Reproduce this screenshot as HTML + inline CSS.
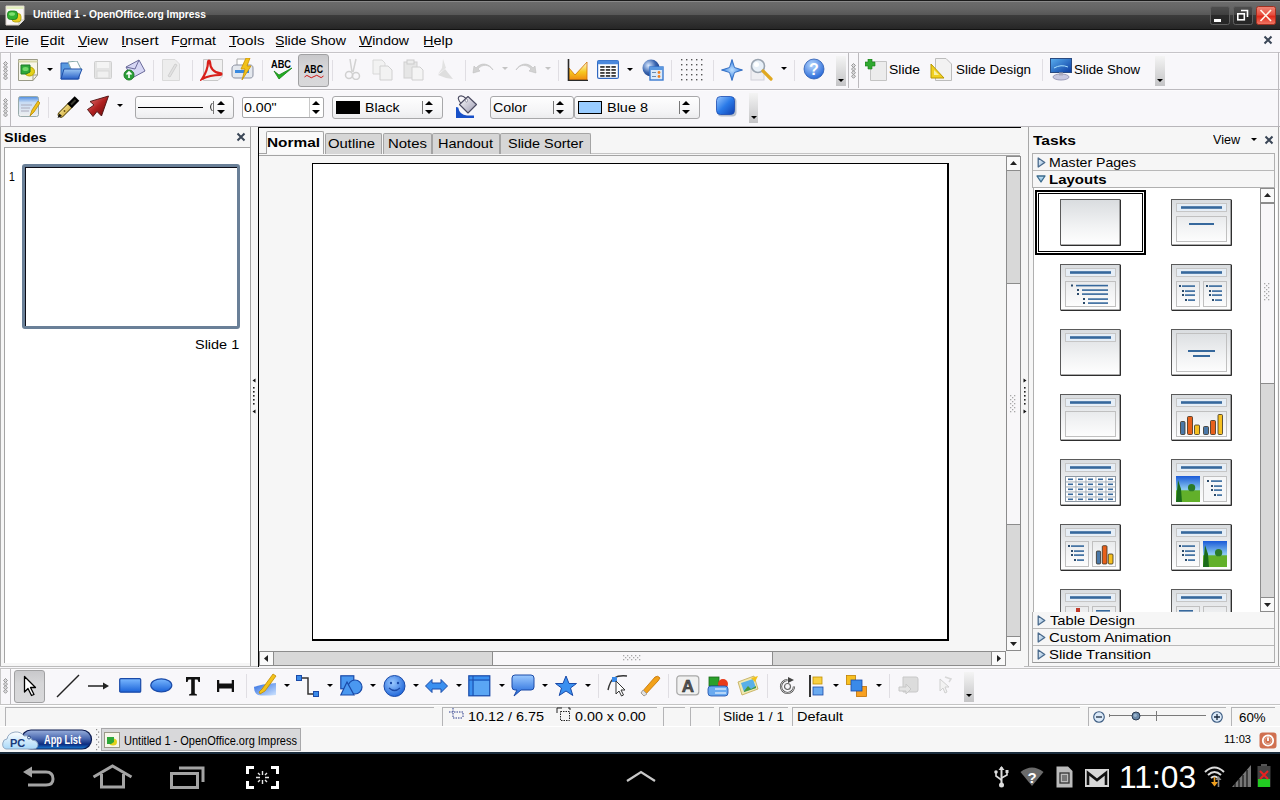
<!DOCTYPE html><html><head><meta charset="utf-8"><style>
html,body{margin:0;padding:0;width:1280px;height:800px;overflow:hidden;background:#f8f7fa;}
.a{position:absolute;}
.t{position:absolute;white-space:nowrap;font-family:"Liberation Sans",sans-serif;line-height:1;transform-origin:0 0;}
svg{display:block;}
</style></head><body>
<div class="a" style="left:0px;top:0px;width:1280px;height:30px;background:linear-gradient(#1a1a1a 0px,#1a1a1a 1px,#8a8a8a 1px,#8a8a8a 2px,#6c6c6c 2px,#646464 9px,#575757 15px,#3c3c3c 15px,#262626 29px,#121212 29px,#121212 30px)"></div>
<svg class="a" style="left:5px;top:5px;" width="20" height="21" viewBox="0 0 20 21"><path d="M1 1H19V15L14 20H1Z" fill="#faf6f6" stroke="#d8d0c8"/><path d="M1.5 1.5H18.5V4H1.5Z" fill="#e4f0c0"/><path d="M14 20V15H19" fill="#e8e8e8" stroke="#c0c0b8"/><rect x="7" y="8.5" width="9" height="8.5" rx="3" fill="#e8d020" stroke="#b0a010" stroke-width="0.8"/><rect x="2.5" y="6" width="10" height="8.5" rx="3" fill="#30b030" stroke="#1a7a1a" stroke-width="0.8"/><ellipse cx="7" cy="9" rx="3" ry="1.8" fill="#80e070"/></svg>
<div class="t" style="left:33.00px;top:8px;font-size:11.5px;line-height:12px;font-weight:bold;color:#ffffff;transform:scaleX(0.8936);">Untitled 1 - OpenOffice.org Impress</div>
<svg class="a" style="left:1210px;top:6px;" width="20" height="19" viewBox="0 0 20 19"><defs><linearGradient id="wb" x1="0" y1="0" x2="0" y2="1"><stop offset="0" stop-color="#4e4e4e"/><stop offset="0.5" stop-color="#3e3e3e"/><stop offset="0.5" stop-color="#2a2a2a"/><stop offset="1" stop-color="#262626"/></linearGradient></defs><rect x="0.5" y="0.5" width="19" height="18" rx="2" fill="url(#wb)" stroke="#606060"/><rect x="4" y="13" width="7" height="3" fill="#fff"/></svg>
<svg class="a" style="left:1233px;top:6px;" width="20" height="19" viewBox="0 0 20 19"><rect x="0.5" y="0.5" width="19" height="18" rx="2" fill="url(#wb)" stroke="#606060"/><path d="M8 4.5H14.5V11" fill="none" stroke="#fff" stroke-width="1.6"/><rect x="4.8" y="7.8" width="6.5" height="6" fill="none" stroke="#fff" stroke-width="1.6"/></svg>
<svg class="a" style="left:1256px;top:6px;" width="20" height="19" viewBox="0 0 20 19"><defs><linearGradient id="rg" x1="0" y1="0" x2="0" y2="1"><stop offset="0" stop-color="#f08878"/><stop offset="0.45" stop-color="#e85040"/><stop offset="0.55" stop-color="#e02a1a"/><stop offset="1" stop-color="#f07a68"/></linearGradient></defs><rect x="0.5" y="0.5" width="19" height="18" rx="2" fill="url(#rg)" stroke="#a03020"/><path d="M4.5 4L15 15M15 4L4.5 15" stroke="#fff4e8" stroke-width="1.7"/></svg>
<div class="a" style="left:0px;top:30px;width:1280px;height:22px;background:#f8f7fa"></div>
<div class="t" style="left:5.00px;top:34px;font-size:12.6px;line-height:14px;color:#000;transform:scaleX(1.1902);">File</div>
<div class="a" style="left:6px;top:46px;width:7px;height:1px;background:#000"></div>
<div class="t" style="left:40.00px;top:34px;font-size:12.6px;line-height:14px;color:#000;transform:scaleX(1.1309);">Edit</div>
<div class="a" style="left:41px;top:46px;width:7px;height:1px;background:#000"></div>
<div class="t" style="left:78.00px;top:34px;font-size:12.6px;line-height:14px;color:#000;transform:scaleX(1.1074);">View</div>
<div class="a" style="left:78px;top:46px;width:9px;height:1px;background:#000"></div>
<div class="t" style="left:121.00px;top:34px;font-size:12.6px;line-height:14px;color:#000;transform:scaleX(1.1921);">Insert</div>
<div class="a" style="left:122px;top:46px;width:4px;height:1px;background:#000"></div>
<div class="t" style="left:171.00px;top:34px;font-size:12.6px;line-height:14px;color:#000;transform:scaleX(1.1290);">Format</div>
<div class="a" style="left:180px;top:46px;width:7px;height:1px;background:#000"></div>
<div class="t" style="left:229.00px;top:34px;font-size:12.6px;line-height:14px;color:#000;transform:scaleX(1.2074);">Tools</div>
<div class="a" style="left:229px;top:46px;width:7px;height:1px;background:#000"></div>
<div class="t" style="left:275.00px;top:34px;font-size:12.6px;line-height:14px;color:#000;transform:scaleX(1.1248);">Slide Show</div>
<div class="a" style="left:276px;top:46px;width:8px;height:1px;background:#000"></div>
<div class="t" style="left:359.00px;top:34px;font-size:12.6px;line-height:14px;color:#000;transform:scaleX(1.1147);">Window</div>
<div class="a" style="left:359px;top:46px;width:13px;height:1px;background:#000"></div>
<div class="t" style="left:423.00px;top:34px;font-size:12.6px;line-height:14px;color:#000;transform:scaleX(1.1539);">Help</div>
<div class="a" style="left:424px;top:46px;width:10px;height:1px;background:#000"></div>
<svg class="a" style="left:1263px;top:35px;" width="10" height="10" viewBox="0 0 10 10"><path d="M1.5 1.5L8.5 8.5M8.5 1.5L1.5 8.5" stroke="#3a4656" stroke-width="2"/></svg>
<div class="a" style="left:0px;top:52px;width:1280px;height:1px;background:#c6c4c8"></div>
<div class="a" style="left:0px;top:53px;width:1280px;height:1px;background:#fcfbfd"></div>
<div class="a" style="left:0px;top:89px;width:1280px;height:1px;background:#bcbabe"></div>
<div class="a" style="left:0px;top:90px;width:1280px;height:1px;background:#fcfbfd"></div>
<div class="a" style="left:0px;top:126px;width:1280px;height:1px;background:#b8b6ba"></div>
<div class="a" style="left:1278px;top:52px;width:1px;height:74px;background:#bcbabe"></div>
<div class="a" style="left:0px;top:53px;width:1px;height:36px;background:#c8c8c8"></div>
<div class="a" style="left:10px;top:53px;width:1px;height:36px;background:#bcbabe"></div>
<svg class="a" style="left:3px;top:61px;" width="5" height="20" viewBox="0 0 5 20"><path d="M2.5 0.5L4.5 2.5L2.5 4.5L0.5 2.5Z" fill="#d8d8da" stroke="#8e8e90" stroke-width="0.9"/><path d="M2.5 4.1L4.5 6.1L2.5 8.1L0.5 6.1Z" fill="#d8d8da" stroke="#8e8e90" stroke-width="0.9"/><path d="M2.5 7.7L4.5 9.7L2.5 11.7L0.5 9.7Z" fill="#d8d8da" stroke="#8e8e90" stroke-width="0.9"/><path d="M2.5 11.3L4.5 13.3L2.5 15.3L0.5 13.3Z" fill="#d8d8da" stroke="#8e8e90" stroke-width="0.9"/><path d="M2.5 14.9L4.5 16.9L2.5 18.9L0.5 16.9Z" fill="#d8d8da" stroke="#8e8e90" stroke-width="0.9"/></svg>
<div class="a" style="left:0px;top:90px;width:1px;height:36px;background:#c8c8c8"></div>
<div class="a" style="left:10px;top:90px;width:1px;height:36px;background:#bcbabe"></div>
<svg class="a" style="left:3px;top:98px;" width="5" height="20" viewBox="0 0 5 20"><path d="M2.5 0.5L4.5 2.5L2.5 4.5L0.5 2.5Z" fill="#d8d8da" stroke="#8e8e90" stroke-width="0.9"/><path d="M2.5 4.1L4.5 6.1L2.5 8.1L0.5 6.1Z" fill="#d8d8da" stroke="#8e8e90" stroke-width="0.9"/><path d="M2.5 7.7L4.5 9.7L2.5 11.7L0.5 9.7Z" fill="#d8d8da" stroke="#8e8e90" stroke-width="0.9"/><path d="M2.5 11.3L4.5 13.3L2.5 15.3L0.5 13.3Z" fill="#d8d8da" stroke="#8e8e90" stroke-width="0.9"/><path d="M2.5 14.9L4.5 16.9L2.5 18.9L0.5 16.9Z" fill="#d8d8da" stroke="#8e8e90" stroke-width="0.9"/></svg>
<div class="a" style="left:848px;top:53px;width:1px;height:35px;background:#bcbabe"></div>
<div class="a" style="left:858px;top:53px;width:1px;height:35px;background:#bcbabe"></div>
<svg class="a" style="left:851px;top:63px;" width="5" height="17" viewBox="0 0 5 17"><path d="M2.5 0.5L4.5 2.5L2.5 4.5L0.5 2.5Z" fill="#d8d8da" stroke="#8e8e90" stroke-width="0.9"/><path d="M2.5 4.1L4.5 6.1L2.5 8.1L0.5 6.1Z" fill="#d8d8da" stroke="#8e8e90" stroke-width="0.9"/><path d="M2.5 7.7L4.5 9.7L2.5 11.7L0.5 9.7Z" fill="#d8d8da" stroke="#8e8e90" stroke-width="0.9"/><path d="M2.5 11.3L4.5 13.3L2.5 15.3L0.5 13.3Z" fill="#d8d8da" stroke="#8e8e90" stroke-width="0.9"/></svg>
<svg class="a" style="left:18px;top:59px;" width="21" height="22" viewBox="0 0 21 22"><path d="M0.5 0.5H19.5V16L15 21.5H0.5Z" fill="#f8f6ea" stroke="#9a9a88"/><path d="M0.5 2.5H19.5" stroke="#d8d8a8" stroke-width="2"/><path d="M15 21.5V16H19.5" fill="none" stroke="#9a9a88"/><ellipse cx="11.5" cy="12.5" rx="5" ry="4.5" fill="#e3d21a" stroke="#b8a400"/><path d="M3 6H12V13L8 15H3Z" fill="#2ea83a" stroke="#1d7a28"/><ellipse cx="7.5" cy="10" rx="3" ry="2" fill="#72d86a"/></svg>
<svg class="a" style="left:46.5px;top:68px;" width="6" height="4" viewBox="0 0 6 4"><path d="M0 0H6L3 3Z" fill="#000"/></svg>
<svg class="a" style="left:60px;top:61px;" width="23" height="19" viewBox="0 0 23 19"><defs><linearGradient id="fo" x1="0" y1="0" x2="0" y2="1"><stop offset="0" stop-color="#9cc8f4"/><stop offset="1" stop-color="#2a62c8"/></linearGradient></defs><path d="M1 2H8L10 4H19V18H1Z" fill="#5a9ae0" stroke="#2a5ab0"/><path d="M8 1L17 0L21 8L12 10Z" fill="#fff" stroke="#8aa"/><path d="M4 8H22L18 18H1Z" fill="url(#fo)" stroke="#1e4ea8"/></svg>
<svg class="a" style="left:94px;top:61px;" width="18" height="18" viewBox="0 0 18 18"><rect x="0.5" y="0.5" width="17" height="17" rx="1" fill="#e4e4e4" stroke="#cfcfcf"/><rect x="3" y="1" width="12" height="6" fill="#f4f4f4"/><rect x="3" y="10" width="12" height="7" fill="#f0f0f0" stroke="#d8d8d8"/></svg>
<svg class="a" style="left:123px;top:59px;" width="23" height="22" viewBox="0 0 23 22"><path d="M3 8L16 1L22 12L9 19Z" fill="#d6d6f4" stroke="#6a6a9a"/><path d="M3 8L12 10L16 1" fill="none" stroke="#6a6a9a"/><circle cx="6" cy="16" r="5" fill="#2ca03a" stroke="#1a7a24"/><path d="M6 19V13M3.5 15.5L6 13L8.5 15.5" stroke="#fff" stroke-width="1.6" fill="none"/></svg>
<div class="a" style="left:153px;top:60px;width:1px;height:21px;background:#e0dee3"></div>
<svg class="a" style="left:162px;top:59px;" width="18" height="22" viewBox="0 0 18 22"><path d="M0.5 0.5H13L17.5 5V21.5H0.5Z" fill="#ededed" stroke="#dadada"/><path d="M6 17L13 5L15 6L8 18Z" fill="#e2e2e2" stroke="#d0d0d0"/></svg>
<div class="a" style="left:192px;top:60px;width:1px;height:21px;background:#e0dee3"></div>
<svg class="a" style="left:200px;top:59px;" width="23" height="22" viewBox="0 0 23 22"><path d="M3.5 0.5H22.5V17L18 21.5H3.5Z" fill="#f0f0f0" stroke="#c8c8c8"/><path d="M2 20C6 14 8 9 8 3C8 1 10 1 10 3C10 9 14 14 20 14C22 14 22 16 20 16C14 16 6 18 2 20Z" fill="none" stroke="#d8201a" stroke-width="2.2"/></svg>
<svg class="a" style="left:231px;top:58px;" width="23" height="23" viewBox="0 0 23 23"><path d="M6 1H16V10H6Z" fill="#fff" stroke="#aaa"/><path d="M1 10C1 8 3 7 5 7H19C21 7 22 8 22 10V17C22 19 21 20 19 20H4C2 20 1 19 1 17Z" fill="#e4e8ee" stroke="#8a90a0"/><rect x="4" y="12" width="14" height="3" fill="#3a8ae0"/><path d="M15 0L10 11H14L11 22L20 8H16L19 0Z" fill="#f2c21a" stroke="#c89000" stroke-width="0.8"/></svg>
<div class="a" style="left:262px;top:60px;width:1px;height:21px;background:#e0dee3"></div>
<svg class="a" style="left:271px;top:58px;" width="22" height="24" viewBox="0 0 22 24"><text x="0" y="10" font-family="Liberation Sans" font-weight="bold" font-size="11" fill="#000" textLength="20" lengthAdjust="spacingAndGlyphs">ABC</text><path d="M3 13L8 21L21 10L8 17Z" fill="#22b022" stroke="#138013" stroke-width="0.8"/></svg>
<div class="a" style="left:298px;top:54px;width:31px;height:33px;background:linear-gradient(#c8c8cb,#d6d6d8 40%,#d8d8da);border:1px solid #a0a0a2;border-radius:3px;box-sizing:border-box"></div>
<svg class="a" style="left:304px;top:63px;" width="20" height="16" viewBox="0 0 20 16"><text x="0" y="10" font-family="Liberation Sans" font-weight="bold" font-size="11" fill="#000" textLength="19" lengthAdjust="spacingAndGlyphs">ABC</text><path d="M0.5 14Q3 11 5 13.5T10 13.5T15 13.5T19.5 13" fill="none" stroke="#d01818" stroke-width="1"/></svg>
<div class="a" style="left:332px;top:60px;width:1px;height:21px;background:#e0dee3"></div>
<svg class="a" style="left:343px;top:58px;" width="18" height="22" viewBox="0 0 18 22"><path d="M7 1L9 14M13 1L10 14" stroke="#d2d2d2" stroke-width="1.5"/><circle cx="6" cy="17" r="3.5" fill="none" stroke="#d0d0d0" stroke-width="1.5"/><circle cx="13" cy="18" r="3.5" fill="none" stroke="#d0d0d0" stroke-width="1.5"/></svg>
<svg class="a" style="left:372px;top:59px;" width="21" height="22" viewBox="0 0 21 22"><path d="M1 1H10L13 4V15H1Z" fill="#f2f2f2" stroke="#d8d8d8"/><path d="M8 7H16L20 11V21H8Z" fill="#f2f2f2" stroke="#d0d0d0"/></svg>
<svg class="a" style="left:403px;top:59px;" width="21" height="22" viewBox="0 0 21 22"><rect x="1" y="3" width="13" height="16" fill="#e6e6e6" stroke="#d0d0d0"/><rect x="4" y="1" width="7" height="4" fill="#ececec" stroke="#ccc"/><path d="M9 8H17L20 11V21H9Z" fill="#f4f4f4" stroke="#d0d0d0"/></svg>
<svg class="a" style="left:434px;top:58px;" width="21" height="23" viewBox="0 0 21 23"><path d="M9 1L12 10L4 16L8 10Z" fill="#e2e2e2"/><path d="M4 17L11 11L19 21L12 20Z" fill="#dedede"/></svg>
<div class="a" style="left:465px;top:60px;width:1px;height:21px;background:#e0dee3"></div>
<svg class="a" style="left:472px;top:62px;" width="22" height="16" viewBox="0 0 22 16"><path d="M21 8C17 2 10 2 6 7L8 9L1 11L2 4L4 6C9 0 17 1 21 8Z" fill="#d2d2d2" stroke="#c0c0c0" stroke-width="0.6"/></svg>
<svg class="a" style="left:501.5px;top:67px;" width="6" height="4" viewBox="0 0 6 4"><path d="M0 0H6L3 3Z" fill="#c4c4c4"/></svg>
<svg class="a" style="left:515px;top:62px;" width="22" height="16" viewBox="0 0 22 16"><path d="M1 8C5 2 12 2 16 7L14 9L21 11L20 4L18 6C13 0 5 1 1 8Z" fill="#d2d2d2" stroke="#c0c0c0" stroke-width="0.6"/></svg>
<svg class="a" style="left:544.5px;top:67px;" width="6" height="4" viewBox="0 0 6 4"><path d="M0 0H6L3 3Z" fill="#c4c4c4"/></svg>
<div class="a" style="left:558px;top:60px;width:1px;height:21px;background:#e0dee3"></div>
<svg class="a" style="left:567px;top:59px;" width="22" height="22" viewBox="0 0 22 22"><defs><linearGradient id="ch" x1="0" y1="0" x2="0" y2="1"><stop offset="0" stop-color="#fffbe0"/><stop offset="0.55" stop-color="#f6c820"/><stop offset="1" stop-color="#f08a10"/></linearGradient></defs><path d="M2 21V9L8 16L20 3V21Z" fill="url(#ch)" stroke="#d07000" stroke-width="0.8"/><path d="M1.5 0V21.5H21" fill="none" stroke="#2a2a2a" stroke-width="1.6"/></svg>
<svg class="a" style="left:597px;top:60px;" width="22" height="19" viewBox="0 0 22 19"><rect x="0.6" y="0.6" width="20.8" height="17.8" rx="1.5" fill="#fff" stroke="#3068c0" stroke-width="1.2"/><rect x="0.6" y="0.6" width="20.8" height="3.6" rx="1.2" fill="#4a88dc"/><g fill="#111"><rect x="3.2" y="6.2" width="4.4" height="1.5"/><rect x="8.8" y="6.2" width="4.4" height="1.5"/><rect x="14.4" y="6.2" width="4.4" height="1.5"/><rect x="3.2" y="9.2" width="4.4" height="1.5"/><rect x="8.8" y="9.2" width="4.4" height="1.5"/><rect x="14.4" y="9.2" width="4.4" height="1.5"/><rect x="3.2" y="12.2" width="4.4" height="1.5"/><rect x="8.8" y="12.2" width="4.4" height="1.5"/><rect x="14.4" y="12.2" width="4.4" height="1.5"/><rect x="3.2" y="15.2" width="4.4" height="1.5"/><rect x="8.8" y="15.2" width="4.4" height="1.5"/><rect x="14.4" y="15.2" width="4.4" height="1.5"/></g></svg>
<svg class="a" style="left:626.5px;top:68px;" width="6" height="4" viewBox="0 0 6 4"><path d="M0 0H6L3 3Z" fill="#000"/></svg>
<svg class="a" style="left:642px;top:59px;" width="22" height="22" viewBox="0 0 22 22"><defs><radialGradient id="gl" cx="0.35" cy="0.35" r="0.7"><stop offset="0" stop-color="#d8e8ff"/><stop offset="0.6" stop-color="#3a66b0"/><stop offset="1" stop-color="#1a3a80"/></radialGradient></defs><circle cx="9" cy="9" r="8.5" fill="url(#gl)"/><rect x="8" y="8" width="13" height="13" fill="#dceaf8" stroke="#3a7ad0" stroke-width="1.4"/><rect x="8" y="8" width="13" height="3" fill="#5a98e0"/><circle cx="17" cy="13.5" r="1.4" fill="#f08020"/><circle cx="17" cy="17.5" r="1.4" fill="#f08020"/><rect x="10" y="13" width="4" height="1" fill="#6a8ab0"/><rect x="10" y="17" width="4" height="1" fill="#6a8ab0"/></svg>
<div class="a" style="left:671px;top:60px;width:1px;height:21px;background:#e0dee3"></div>
<svg class="a" style="left:681px;top:59px;" width="22" height="22" viewBox="0 0 22 22"><rect x="0" y="0" width="1.4" height="1.4" fill="#555"/><rect x="0" y="5" width="1.4" height="1.4" fill="#555"/><rect x="0" y="10" width="1.4" height="1.4" fill="#555"/><rect x="0" y="15" width="1.4" height="1.4" fill="#555"/><rect x="0" y="20" width="1.4" height="1.4" fill="#555"/><rect x="5" y="0" width="1.4" height="1.4" fill="#555"/><rect x="5" y="5" width="1.4" height="1.4" fill="#555"/><rect x="5" y="10" width="1.4" height="1.4" fill="#555"/><rect x="5" y="15" width="1.4" height="1.4" fill="#555"/><rect x="5" y="20" width="1.4" height="1.4" fill="#555"/><rect x="10" y="0" width="1.4" height="1.4" fill="#555"/><rect x="10" y="5" width="1.4" height="1.4" fill="#555"/><rect x="10" y="10" width="1.4" height="1.4" fill="#555"/><rect x="10" y="15" width="1.4" height="1.4" fill="#555"/><rect x="10" y="20" width="1.4" height="1.4" fill="#555"/><rect x="15" y="0" width="1.4" height="1.4" fill="#555"/><rect x="15" y="5" width="1.4" height="1.4" fill="#555"/><rect x="15" y="10" width="1.4" height="1.4" fill="#555"/><rect x="15" y="15" width="1.4" height="1.4" fill="#555"/><rect x="15" y="20" width="1.4" height="1.4" fill="#555"/><rect x="20" y="0" width="1.4" height="1.4" fill="#555"/><rect x="20" y="5" width="1.4" height="1.4" fill="#555"/><rect x="20" y="10" width="1.4" height="1.4" fill="#555"/><rect x="20" y="15" width="1.4" height="1.4" fill="#555"/><rect x="20" y="20" width="1.4" height="1.4" fill="#555"/></svg>
<div class="a" style="left:713px;top:60px;width:1px;height:21px;background:#e0dee3"></div>
<svg class="a" style="left:721px;top:59px;" width="22" height="22" viewBox="0 0 22 22"><defs><radialGradient id="st" cx="0.5" cy="0.5" r="0.5"><stop offset="0" stop-color="#bfe0ff"/><stop offset="1" stop-color="#2a78e0"/></radialGradient></defs><path d="M11 0.5L13.5 8.5L21.5 11L13.5 13.5L11 21.5L8.5 13.5L0.5 11L8.5 8.5Z" fill="url(#st)" stroke="#1a5ab8" stroke-width="0.8"/></svg>
<svg class="a" style="left:750px;top:58px;" width="24" height="23" viewBox="0 0 24 23"><rect x="1" y="9" width="13" height="13" fill="#eeeef2" stroke="#d0d0d8"/><circle cx="8" cy="8" r="6.5" fill="#e8f0f8" stroke="#9aa4b0" stroke-width="1.6"/><circle cx="6.5" cy="6.5" r="2.5" fill="#fff"/><path d="M13 13L21 21" stroke="#e0a820" stroke-width="3.2" stroke-linecap="round"/></svg>
<svg class="a" style="left:780.5px;top:67px;" width="6" height="4" viewBox="0 0 6 4"><path d="M0 0H6L3 3Z" fill="#000"/></svg>
<div class="a" style="left:794px;top:60px;width:1px;height:21px;background:#e0dee3"></div>
<svg class="a" style="left:803px;top:58px;" width="22" height="22" viewBox="0 0 22 22"><defs><radialGradient id="hp" cx="0.4" cy="0.3" r="0.7"><stop offset="0" stop-color="#b8d8ff"/><stop offset="1" stop-color="#2a6ad8"/></radialGradient></defs><circle cx="11" cy="11" r="10" fill="url(#hp)" stroke="#2a5ab0" stroke-width="0.8"/><text x="11" y="17" text-anchor="middle" font-family="Liberation Sans" font-weight="bold" font-size="16" fill="#fff">?</text></svg>
<div class="a" style="left:836px;top:56px;width:10px;height:30px;background:linear-gradient(#f4f4f4,#c4c4c6)"></div>
<svg class="a" style="left:838px;top:79px;" width="6" height="4" viewBox="0 0 6 4"><path d="M0 0H6L3 3Z" fill="#000"/></svg>
<svg class="a" style="left:865px;top:59px;" width="23" height="22" viewBox="0 0 23 22"><path d="M5.5 2.5H21.5V21.5H5.5Z" fill="#ececec" stroke="#c4c4c4"/><path d="M3 0H7V3H10V7H7V10H3V7H0V3H3Z" fill="#2fa82f" stroke="#1a7a1a" stroke-width="0.6"/></svg>
<div class="t" style="left:889.00px;top:62px;font-size:13px;line-height:15px;color:#000;transform:scaleX(1.0755);">Slide</div>
<svg class="a" style="left:930px;top:58px;" width="22" height="23" viewBox="0 0 22 23"><path d="M5.5 0.5H16L21.5 6V22.5H5.5Z" fill="#f2f2f2" stroke="#bcbcbc"/><path d="M1 20L1 6L14 20Z" fill="#f0d020" stroke="#b89800"/><path d="M4 17V12L9 17Z" fill="#f8f0a0"/></svg>
<div class="t" style="left:956.00px;top:62px;font-size:13px;line-height:15px;color:#000;transform:scaleX(1.0282);">Slide Design</div>
<div class="a" style="left:1042px;top:59px;width:1px;height:22px;background:#e0dee3"></div>
<svg class="a" style="left:1050px;top:58px;" width="22" height="23" viewBox="0 0 22 23"><defs><linearGradient id="mon" x1="0" y1="0" x2="1" y2="1"><stop offset="0" stop-color="#5ab0f0"/><stop offset="1" stop-color="#0a3aa0"/></linearGradient></defs><rect x="0.5" y="0.5" width="21" height="14" fill="url(#mon)" stroke="#2a4a80"/><path d="M4 10Q11 6 18 9" stroke="#a8e0ff" stroke-width="1" fill="none"/><ellipse cx="11" cy="19" rx="8" ry="3" fill="#c8c8e0" stroke="#9a9ab8"/><rect x="9" y="14.5" width="4" height="3" fill="#aab"/></svg>
<div class="t" style="left:1074.00px;top:62px;font-size:13px;line-height:15px;color:#000;transform:scaleX(1.0146);">Slide Show</div>
<div class="a" style="left:1155px;top:56px;width:10px;height:30px;background:linear-gradient(#f4f4f4,#c4c4c6)"></div>
<svg class="a" style="left:1157px;top:79px;" width="6" height="4" viewBox="0 0 6 4"><path d="M0 0H6L3 3Z" fill="#000"/></svg>
<svg class="a" style="left:18px;top:96px;" width="22" height="22" viewBox="0 0 22 22"><defs><linearGradient id="se" x1="0" y1="0" x2="0" y2="1"><stop offset="0" stop-color="#4a8ae0"/><stop offset="0.3" stop-color="#c8dcf4"/><stop offset="1" stop-color="#f0f0f0"/></linearGradient></defs><rect x="0.5" y="0.5" width="20" height="20" rx="2" fill="url(#se)" stroke="#9aa"/><path d="M3 9H14M3 12H12M3 15H11" stroke="#aab" stroke-width="1"/><path d="M12 20L14 14L20 5L22 7L16 16Z" fill="#f2c21a" stroke="#b88a00" stroke-width="0.8"/></svg>
<div class="a" style="left:48px;top:97px;width:1px;height:21px;background:#e0dee3"></div>
<svg class="a" style="left:56px;top:95px;" width="24" height="24" viewBox="0 0 24 24"><defs><linearGradient id="pg" x1="0" y1="0" x2="1" y2="1"><stop offset="0" stop-color="#fff0a0"/><stop offset="1" stop-color="#c8a030"/></linearGradient></defs><path d="M5 19.5L14 10.5" stroke="#5a4a10" stroke-width="6.5" stroke-linecap="round"/><path d="M5 19.5L14 10.5" stroke="url(#pg)" stroke-width="4.6" stroke-linecap="round"/><path d="M13.5 11L21 3.5" stroke="#000" stroke-width="6.5"/><path d="M15 9.5L19.5 5" stroke="#3a3a30" stroke-width="2"/><path d="M1.5 23L3.5 18.5L6 21Z" fill="#111"/><circle cx="8.5" cy="16" r="0.9" fill="#6a5010"/></svg>
<svg class="a" style="left:86px;top:95px;" width="24" height="24" viewBox="0 0 24 24"><defs><linearGradient id="ar" x1="0" y1="0" x2="1" y2="1"><stop offset="0" stop-color="#e88080"/><stop offset="0.5" stop-color="#b02020"/><stop offset="1" stop-color="#600808"/></linearGradient></defs><path d="M22.5 1L4 6.5L8 10L1.5 14.5L7 21.5L11 16.5L15.5 21Z" fill="url(#ar)" stroke="#4a1010" stroke-width="0.9" stroke-linejoin="round"/></svg>
<svg class="a" style="left:116.5px;top:104px;" width="6" height="4" viewBox="0 0 6 4"><path d="M0 0H6L3 3Z" fill="#000"/></svg>
<div class="a" style="left:135px;top:96px;width:99px;height:23px;background:linear-gradient(#fefefe,#f4f4f6 70%,#ececee);border:1px solid #a8a8aa;border-radius:3px;box-sizing:border-box"></div>
<div class="a" style="left:138px;top:107px;width:65px;height:1px;background:#000"></div>
<svg class="a" style="left:209px;top:102px;" width="4" height="10" viewBox="0 0 4 10"><path d="M3.5 1C1 3 1 7 3.5 9" stroke="#222" fill="none" stroke-width="1"/></svg>
<div class="a" style="left:213px;top:101px;width:1px;height:13px;background:#777"></div>
<svg class="a" style="left:217px;top:100px;" width="8" height="15" viewBox="0 0 8 15"><path d="M0 5L4 1L8 5Z M0 10L4 14L8 10Z" fill="#000"/></svg>
<div class="a" style="left:242px;top:97px;width:82px;height:21px;background:#fff;border:1px solid #a8a8aa;border-radius:2px;box-sizing:border-box"></div>
<div class="a" style="left:309px;top:98px;width:1px;height:19px;background:#c8c8c8"></div>
<svg class="a" style="left:312px;top:100px;" width="8" height="15" viewBox="0 0 8 15"><path d="M0 5L4 1L8 5Z M0 10L4 14L8 10Z" fill="#000"/></svg>
<div class="t" style="left:244.00px;top:100px;font-size:13.5px;line-height:15px;color:#000;transform:scaleX(1.0486);">0.00"</div>
<div class="a" style="left:332px;top:96px;width:111px;height:23px;background:linear-gradient(#fefefe,#f4f4f6 70%,#ececee);border:1px solid #a8a8aa;border-radius:3px;box-sizing:border-box"></div>
<div class="a" style="left:336px;top:101px;width:24px;height:13px;background:#000"></div>
<div class="t" style="left:365.00px;top:100px;font-size:13.5px;line-height:15px;color:#000;transform:scaleX(1.0447);">Black</div>
<div class="a" style="left:422px;top:101px;width:1px;height:13px;background:#777"></div>
<svg class="a" style="left:425px;top:100px;" width="8" height="15" viewBox="0 0 8 15"><path d="M0 5L4 1L8 5Z M0 10L4 14L8 10Z" fill="#000"/></svg>
<svg class="a" style="left:456px;top:95px;" width="22" height="24" viewBox="0 0 22 24"><defs><linearGradient id="bk" x1="0" y1="0" x2="1" y2="1"><stop offset="0" stop-color="#ffffff"/><stop offset="1" stop-color="#9a98b0"/></linearGradient></defs><path d="M0 12L2.2 12.5Q3.5 20 11 20.5H18V23H0Z" fill="#1850c8"/><path d="M12 1.5L20.5 9.5L12 18L3.5 9.5Z" fill="url(#bk)" stroke="#4a4a60" stroke-width="1.1" stroke-linejoin="round"/><path d="M5 8.5Q0.5 3 3.5 1.2Q6.5 0 10 3.5" fill="none" stroke="#4a4a60" stroke-width="1.1"/><ellipse cx="10.5" cy="5.5" rx="1" ry="1.6" fill="#fff" stroke="#6a6a80" stroke-width="0.6"/></svg>
<div class="a" style="left:490px;top:96px;width:84px;height:23px;background:linear-gradient(#fefefe,#f4f4f6 70%,#ececee);border:1px solid #a8a8aa;border-radius:3px;box-sizing:border-box"></div>
<div class="t" style="left:492.50px;top:100px;font-size:13.5px;line-height:15px;color:#000;transform:scaleX(1.0547);">Color</div>
<div class="a" style="left:553px;top:101px;width:1px;height:13px;background:#777"></div>
<svg class="a" style="left:556px;top:100px;" width="8" height="15" viewBox="0 0 8 15"><path d="M0 5L4 1L8 5Z M0 10L4 14L8 10Z" fill="#000"/></svg>
<div class="a" style="left:574px;top:96px;width:126px;height:23px;background:linear-gradient(#fefefe,#f4f4f6 70%,#ececee);border:1px solid #a8a8aa;border-radius:3px;box-sizing:border-box"></div>
<div class="a" style="left:578px;top:101px;width:24px;height:13px;background:#99ccff;border:1px solid #000;box-sizing:border-box"></div>
<div class="t" style="left:606.50px;top:100px;font-size:13.5px;line-height:15px;color:#000;transform:scaleX(1.0719);">Blue 8</div>
<div class="a" style="left:679px;top:101px;width:1px;height:13px;background:#777"></div>
<svg class="a" style="left:682px;top:100px;" width="8" height="15" viewBox="0 0 8 15"><path d="M0 5L4 1L8 5Z M0 10L4 14L8 10Z" fill="#000"/></svg>
<svg class="a" style="left:716px;top:96px;" width="21" height="21" viewBox="0 0 21 21"><defs><linearGradient id="sh" x1="0" y1="0" x2="1" y2="1"><stop offset="0" stop-color="#9ac8ff"/><stop offset="0.5" stop-color="#2a7ae8"/><stop offset="1" stop-color="#1040b0"/></linearGradient></defs><rect x="1.5" y="1.5" width="19" height="19" rx="4" fill="#b8c0cc"/><rect x="0.5" y="0.5" width="18" height="18" rx="4" fill="url(#sh)" stroke="#1a4ab0" stroke-width="0.8"/></svg>
<div class="a" style="left:749px;top:93px;width:9px;height:30px;background:linear-gradient(#f4f4f4,#c4c4c6)"></div>
<svg class="a" style="left:750.5px;top:116px;" width="6" height="4" viewBox="0 0 6 4"><path d="M0 0H6L3 3Z" fill="#000"/></svg>
<div class="a" style="left:0px;top:127px;width:1280px;height:541px;background:#f6f6f6"></div>
<div class="a" style="left:0px;top:127px;width:1px;height:541px;background:#a8a8a8"></div>
<div class="t" style="left:4.25px;top:130px;font-size:13.6px;line-height:15px;font-weight:bold;color:#000;transform:scaleX(1.0622);">Slides</div>
<svg class="a" style="left:236px;top:132px;" width="10" height="10" viewBox="0 0 10 10"><path d="M1.5 1.5L8.5 8.5M8.5 1.5L1.5 8.5" stroke="#3a4656" stroke-width="2"/></svg>
<div class="a" style="left:4px;top:147px;width:246px;height:516px;background:#fff;border-left:1px solid #a4a4a4;border-top:1px solid #a4a4a4;box-sizing:border-box"></div>
<div class="t" style="left:8.80px;top:169px;font-size:13px;line-height:15px;color:#000;transform:scaleX(0.8080);">1</div>
<div class="a" style="left:22px;top:164px;width:218px;height:165px;border:3px solid #6a8098;border-radius:3px;box-sizing:border-box;background:#fff"></div>
<div class="a" style="left:25px;top:167px;width:212px;height:159px;border-left:1px solid #0a0a14;border-top:1px solid #0a0a14;box-sizing:border-box"></div>
<div class="t" style="left:194.80px;top:337px;font-size:13px;line-height:15px;color:#000;transform:scaleX(1.1128);">Slide 1</div>
<div class="a" style="left:250px;top:127px;width:1px;height:539px;background:#a4a4a4"></div>
<div class="a" style="left:0px;top:666px;width:258px;height:1px;background:#bcbcbc"></div>
<svg class="a" style="left:252px;top:378px;" width="5" height="36" viewBox="0 0 5 36"><path d="M3.5 0.5L0.5 2.5L3.5 4.5Z" fill="#111"/><rect x="1" y="9" width="1.6" height="1.6" fill="#222"/><rect x="1" y="13" width="1.6" height="1.6" fill="#222"/><rect x="1" y="17" width="1.6" height="1.6" fill="#222"/><rect x="1" y="21" width="1.6" height="1.6" fill="#222"/><rect x="1" y="25" width="1.6" height="1.6" fill="#222"/><path d="M3.5 31.5L0.5 33.5L3.5 35.5Z" fill="#111"/></svg>
<div class="a" style="left:258px;top:127px;width:1px;height:540px;background:#000"></div>
<div class="a" style="left:258px;top:127px;width:763px;height:1px;background:#000"></div>
<div class="a" style="left:1020px;top:156px;width:1px;height:495px;background:#8c8c8c"></div>
<div class="a" style="left:259px;top:155px;width:761px;height:1px;background:#a4a4a4"></div>
<div class="a" style="left:259px;top:153px;width:7px;height:1px;background:#a4a4a4"></div>
<div class="a" style="left:591px;top:153px;width:429px;height:1px;background:#c4c4c4"></div>
<div class="a" style="left:325px;top:133px;width:57px;height:21px;background:#d6d6d6;border:1px solid #a4a4a4;border-bottom:none;border-radius:2px 2px 0 0;box-sizing:border-box"></div>
<div class="t" style="left:328.40px;top:136px;font-size:13.3px;line-height:15px;color:#000;transform:scaleX(1.1185);">Outline</div>
<div class="a" style="left:383px;top:133px;width:49px;height:21px;background:#d6d6d6;border:1px solid #a4a4a4;border-bottom:none;border-radius:2px 2px 0 0;box-sizing:border-box"></div>
<div class="t" style="left:387.60px;top:136px;font-size:13.3px;line-height:15px;color:#000;transform:scaleX(1.1224);">Notes</div>
<div class="a" style="left:432px;top:133px;width:68px;height:21px;background:#d6d6d6;border:1px solid #a4a4a4;border-bottom:none;border-radius:2px 2px 0 0;box-sizing:border-box"></div>
<div class="t" style="left:438.10px;top:136px;font-size:13.3px;line-height:15px;color:#000;transform:scaleX(1.0928);">Handout</div>
<div class="a" style="left:500px;top:133px;width:91px;height:21px;background:#d6d6d6;border:1px solid #a4a4a4;border-bottom:none;border-radius:2px 2px 0 0;box-sizing:border-box"></div>
<div class="t" style="left:508.00px;top:136px;font-size:13.3px;line-height:15px;color:#000;transform:scaleX(1.0854);">Slide Sorter</div>
<div class="a" style="left:266px;top:131px;width:58px;height:23px;background:#fafafa;border:1px solid #a4a4a4;border-bottom:none;border-radius:2px 2px 0 0;box-sizing:border-box"></div>
<div class="t" style="left:267.00px;top:135px;font-size:13.6px;line-height:15px;font-weight:bold;color:#000;transform:scaleX(1.1309);">Normal</div>
<div class="a" style="left:259px;top:156px;width:747px;height:495px;background:#f6f6f6"></div>
<div class="a" style="left:312px;top:163px;width:637px;height:478px;background:#fff;border:1px solid #000;border-right-width:2px;border-bottom-width:2px;box-sizing:border-box"></div>
<div class="a" style="left:1006px;top:156px;width:15px;height:495px;background:#d8d8d8;border-left:1px solid #8c8c8c;border-right:1px solid #8c8c8c;box-sizing:border-box"></div>
<div class="a" style="left:1006px;top:156px;width:15px;height:15px;background:#fafafa;border:1px solid #8c8c8c;box-sizing:border-box"></div>
<svg class="a" style="left:1010px;top:161px;" width="7" height="4" viewBox="0 0 7 4"><path d="M0 4H7L3.5 0Z" fill="#222"/></svg>
<div class="a" style="left:1006px;top:283px;width:15px;height:242px;background:#f8f7f9;border:1px solid #8c8c8c;box-sizing:border-box"></div>
<svg class="a" style="left:1010px;top:395px;" width="6" height="18" viewBox="0 0 6 18"><rect x="0" y="0" width="1.3" height="1.3" fill="#a8a8a8"/><rect x="4" y="0" width="1.3" height="1.3" fill="#a8a8a8"/><rect x="2" y="2" width="1.3" height="1.3" fill="#a8a8a8"/><rect x="0" y="4" width="1.3" height="1.3" fill="#a8a8a8"/><rect x="4" y="4" width="1.3" height="1.3" fill="#a8a8a8"/><rect x="2" y="6" width="1.3" height="1.3" fill="#a8a8a8"/><rect x="0" y="8" width="1.3" height="1.3" fill="#a8a8a8"/><rect x="4" y="8" width="1.3" height="1.3" fill="#a8a8a8"/><rect x="2" y="10" width="1.3" height="1.3" fill="#a8a8a8"/><rect x="0" y="12" width="1.3" height="1.3" fill="#a8a8a8"/><rect x="4" y="12" width="1.3" height="1.3" fill="#a8a8a8"/><rect x="2" y="14" width="1.3" height="1.3" fill="#a8a8a8"/><rect x="0" y="16" width="1.3" height="1.3" fill="#a8a8a8"/><rect x="4" y="16" width="1.3" height="1.3" fill="#a8a8a8"/></svg>
<div class="a" style="left:1006px;top:636px;width:15px;height:15px;background:#fafafa;border:1px solid #8c8c8c;box-sizing:border-box"></div>
<svg class="a" style="left:1010px;top:642px;" width="7" height="4" viewBox="0 0 7 4"><path d="M0 0H7L3.5 4Z" fill="#222"/></svg>
<div class="a" style="left:259px;top:651px;width:747px;height:15px;background:#d8d8d8;border-top:1px solid #8c8c8c;border-bottom:1px solid #8c8c8c;box-sizing:border-box"></div>
<div class="a" style="left:259px;top:651px;width:15px;height:15px;background:#fafafa;border:1px solid #8c8c8c;box-sizing:border-box"></div>
<svg class="a" style="left:264px;top:655px;" width="4" height="7" viewBox="0 0 4 7"><path d="M4 0V7L0 3.5Z" fill="#222"/></svg>
<div class="a" style="left:492px;top:651px;width:281px;height:15px;background:#f8f7f9;border:1px solid #8c8c8c;box-sizing:border-box"></div>
<svg class="a" style="left:623px;top:655px;" width="18" height="6" viewBox="0 0 18 6"><rect x="0" y="0" width="1.3" height="1.3" fill="#a8a8a8"/><rect x="0" y="4" width="1.3" height="1.3" fill="#a8a8a8"/><rect x="2" y="2" width="1.3" height="1.3" fill="#a8a8a8"/><rect x="4" y="0" width="1.3" height="1.3" fill="#a8a8a8"/><rect x="4" y="4" width="1.3" height="1.3" fill="#a8a8a8"/><rect x="6" y="2" width="1.3" height="1.3" fill="#a8a8a8"/><rect x="8" y="0" width="1.3" height="1.3" fill="#a8a8a8"/><rect x="8" y="4" width="1.3" height="1.3" fill="#a8a8a8"/><rect x="10" y="2" width="1.3" height="1.3" fill="#a8a8a8"/><rect x="12" y="0" width="1.3" height="1.3" fill="#a8a8a8"/><rect x="12" y="4" width="1.3" height="1.3" fill="#a8a8a8"/><rect x="14" y="2" width="1.3" height="1.3" fill="#a8a8a8"/><rect x="16" y="0" width="1.3" height="1.3" fill="#a8a8a8"/><rect x="16" y="4" width="1.3" height="1.3" fill="#a8a8a8"/></svg>
<div class="a" style="left:991px;top:651px;width:15px;height:15px;background:#fafafa;border:1px solid #8c8c8c;box-sizing:border-box"></div>
<svg class="a" style="left:997px;top:655px;" width="4" height="7" viewBox="0 0 4 7"><path d="M0 0V7L4 3.5Z" fill="#222"/></svg>
<svg class="a" style="left:1023px;top:378px;" width="5" height="36" viewBox="0 0 5 36"><path d="M0.5 0.5L3.5 2.5L0.5 4.5Z" fill="#111"/><rect x="1" y="9" width="1.6" height="1.6" fill="#222"/><rect x="1" y="13" width="1.6" height="1.6" fill="#222"/><rect x="1" y="17" width="1.6" height="1.6" fill="#222"/><rect x="1" y="21" width="1.6" height="1.6" fill="#222"/><rect x="1" y="25" width="1.6" height="1.6" fill="#222"/><path d="M0.5 31.5L3.5 33.5L0.5 35.5Z" fill="#111"/></svg>
<div class="a" style="left:1028px;top:127px;width:1px;height:540px;background:#a8a8a8"></div>
<div class="a" style="left:1278px;top:127px;width:1px;height:540px;background:#a4a4a4"></div>
<div class="a" style="left:1024px;top:666px;width:256px;height:1px;background:#bcbcbc"></div>
<div class="t" style="left:1033.00px;top:133px;font-size:13.6px;line-height:15px;font-weight:bold;color:#000;transform:scaleX(1.1462);">Tasks</div>
<div class="t" style="left:1213.20px;top:132px;font-size:13px;line-height:15px;color:#000;transform:scaleX(0.9701);">View</div>
<svg class="a" style="left:1250.5px;top:138px;" width="6" height="4" viewBox="0 0 6 4"><path d="M0 0H6L3 3Z" fill="#000"/></svg>
<svg class="a" style="left:1264px;top:135px;" width="10" height="10" viewBox="0 0 10 10"><path d="M1.5 1.5L8.5 8.5M8.5 1.5L1.5 8.5" stroke="#3a4656" stroke-width="2"/></svg>
<div class="a" style="left:1032px;top:153px;width:243px;height:35px;border:1px solid #b0b0b0;box-sizing:border-box"></div>
<div class="a" style="left:1033px;top:170px;width:241px;height:1px;background:#b8b8b8"></div>
<svg class="a" style="left:1037px;top:157px;" width="9" height="11" viewBox="0 0 9 11"><defs><linearGradient id="tr" x1="0" y1="0" x2="1" y2="1"><stop offset="0" stop-color="#f4f8fc"/><stop offset="1" stop-color="#8ab4d8"/></linearGradient></defs><path d="M1.2 1L7.8 5.5L1.2 10Z" fill="url(#tr)" stroke="#4a6a8c" stroke-width="1.3" stroke-linejoin="round"/></svg>
<div class="t" style="left:1048.50px;top:155px;font-size:13.3px;line-height:15px;color:#000;transform:scaleX(1.0603);">Master Pages</div>
<svg class="a" style="left:1036px;top:175px;" width="10" height="8" viewBox="0 0 10 8"><defs><linearGradient id="td" x1="0" y1="0" x2="0" y2="1"><stop offset="0" stop-color="#c8e6f8"/><stop offset="1" stop-color="#78b0d8"/></linearGradient></defs><path d="M1 1H9L5 7Z" fill="url(#td)" stroke="#3a6a8c" stroke-width="1.3" stroke-linejoin="round"/></svg>
<div class="t" style="left:1048.50px;top:172px;font-size:13.6px;line-height:15px;font-weight:bold;color:#000;transform:scaleX(1.1036);">Layouts</div>
<div class="a" style="left:1033px;top:188px;width:244px;height:424px;background:#fff;border-left:1px solid #b0b0b0;box-sizing:border-box"></div>
<div class="a" style="left:1260px;top:188px;width:15px;height:424px;background:#d8d8d8;border-left:1px solid #8c8c8c;border-right:1px solid #8c8c8c;box-sizing:border-box"></div>
<div class="a" style="left:1260px;top:188px;width:15px;height:15px;background:#fafafa;border:1px solid #8c8c8c;box-sizing:border-box"></div>
<svg class="a" style="left:1264px;top:193px;" width="7" height="4" viewBox="0 0 7 4"><path d="M0 4H7L3.5 0Z" fill="#222"/></svg>
<div class="a" style="left:1260px;top:203px;width:15px;height:181px;background:#f8f7f9;border:1px solid #8c8c8c;box-sizing:border-box"></div>
<svg class="a" style="left:1264px;top:283px;" width="6" height="18" viewBox="0 0 6 18"><rect x="0" y="0" width="1.3" height="1.3" fill="#a8a8a8"/><rect x="4" y="0" width="1.3" height="1.3" fill="#a8a8a8"/><rect x="2" y="2" width="1.3" height="1.3" fill="#a8a8a8"/><rect x="0" y="4" width="1.3" height="1.3" fill="#a8a8a8"/><rect x="4" y="4" width="1.3" height="1.3" fill="#a8a8a8"/><rect x="2" y="6" width="1.3" height="1.3" fill="#a8a8a8"/><rect x="0" y="8" width="1.3" height="1.3" fill="#a8a8a8"/><rect x="4" y="8" width="1.3" height="1.3" fill="#a8a8a8"/><rect x="2" y="10" width="1.3" height="1.3" fill="#a8a8a8"/><rect x="0" y="12" width="1.3" height="1.3" fill="#a8a8a8"/><rect x="4" y="12" width="1.3" height="1.3" fill="#a8a8a8"/><rect x="2" y="14" width="1.3" height="1.3" fill="#a8a8a8"/><rect x="0" y="16" width="1.3" height="1.3" fill="#a8a8a8"/><rect x="4" y="16" width="1.3" height="1.3" fill="#a8a8a8"/></svg>
<div class="a" style="left:1260px;top:597px;width:15px;height:15px;background:#fafafa;border:1px solid #8c8c8c;box-sizing:border-box"></div>
<svg class="a" style="left:1264px;top:603px;" width="7" height="4" viewBox="0 0 7 4"><path d="M0 0H7L3.5 4Z" fill="#222"/></svg>
<div class="a" style="left:1032px;top:612px;width:243px;height:51px;border:1px solid #b0b0b0;border-top:none;border-bottom:1px solid #999;box-sizing:border-box"></div>
<div class="a" style="left:1033px;top:628px;width:241px;height:1px;background:#b8b8b8"></div>
<div class="a" style="left:1033px;top:645px;width:241px;height:1px;background:#b8b8b8"></div>
<svg class="a" style="left:1037px;top:615px;" width="9" height="11" viewBox="0 0 9 11"><defs><linearGradient id="tr" x1="0" y1="0" x2="1" y2="1"><stop offset="0" stop-color="#f4f8fc"/><stop offset="1" stop-color="#8ab4d8"/></linearGradient></defs><path d="M1.2 1L7.8 5.5L1.2 10Z" fill="url(#tr)" stroke="#4a6a8c" stroke-width="1.3" stroke-linejoin="round"/></svg>
<div class="t" style="left:1049.50px;top:613px;font-size:13.3px;line-height:15px;color:#000;transform:scaleX(1.1059);">Table Design</div>
<svg class="a" style="left:1037px;top:632px;" width="9" height="11" viewBox="0 0 9 11"><defs><linearGradient id="tr" x1="0" y1="0" x2="1" y2="1"><stop offset="0" stop-color="#f4f8fc"/><stop offset="1" stop-color="#8ab4d8"/></linearGradient></defs><path d="M1.2 1L7.8 5.5L1.2 10Z" fill="url(#tr)" stroke="#4a6a8c" stroke-width="1.3" stroke-linejoin="round"/></svg>
<div class="t" style="left:1048.50px;top:630px;font-size:13.3px;line-height:15px;color:#000;transform:scaleX(1.1307);">Custom Animation</div>
<svg class="a" style="left:1037px;top:649px;" width="9" height="11" viewBox="0 0 9 11"><defs><linearGradient id="tr" x1="0" y1="0" x2="1" y2="1"><stop offset="0" stop-color="#f4f8fc"/><stop offset="1" stop-color="#8ab4d8"/></linearGradient></defs><path d="M1.2 1L7.8 5.5L1.2 10Z" fill="url(#tr)" stroke="#4a6a8c" stroke-width="1.3" stroke-linejoin="round"/></svg>
<div class="t" style="left:1048.50px;top:647px;font-size:13.3px;line-height:15px;color:#000;transform:scaleX(1.1225);">Slide Transition</div>
<div class="a" style="left:1034px;top:188px;width:226px;height:424px;overflow:hidden">
<svg class="a" style="left:26px;top:11px;" width="61" height="47" viewBox="0 0 61 47"><defs><linearGradient id="tg" x1="0" y1="0" x2="0" y2="1"><stop offset="0" stop-color="#d9dcdf"/><stop offset="0.6" stop-color="#f2f3f4"/><stop offset="1" stop-color="#ffffff"/></linearGradient><linearGradient id="sky" x1="0" y1="0" x2="0" y2="1"><stop offset="0" stop-color="#1a5ad8"/><stop offset="0.5" stop-color="#8ac8f0"/></linearGradient></defs><rect x="0.5" y="0.5" width="59.5" height="45.5" fill="url(#tg)" stroke="#5a5a5a"/><path d="M60.5 1V46.5H1" stroke="#2e2e2e" fill="none"/></svg>
<svg class="a" style="left:137px;top:11px;" width="61" height="47" viewBox="0 0 61 47"><defs><linearGradient id="tg" x1="0" y1="0" x2="0" y2="1"><stop offset="0" stop-color="#d9dcdf"/><stop offset="0.6" stop-color="#f2f3f4"/><stop offset="1" stop-color="#ffffff"/></linearGradient><linearGradient id="sky" x1="0" y1="0" x2="0" y2="1"><stop offset="0" stop-color="#1a5ad8"/><stop offset="0.5" stop-color="#8ac8f0"/></linearGradient></defs><rect x="0.5" y="0.5" width="59.5" height="45.5" fill="url(#tg)" stroke="#5a5a5a"/><path d="M60.5 1V46.5H1" stroke="#2e2e2e" fill="none"/><rect x="5.5" y="4.5" width="50" height="8" fill="#e6eef6" stroke="#c6c6c6"/><rect x="10" y="7.2" width="41" height="2.6" fill="#36689c"/><rect x="5.5" y="17.5" width="50" height="25" fill="none" stroke="#c0c0c0"/><rect x="18" y="24" width="25" height="2" fill="#36689c"/></svg>
<svg class="a" style="left:26px;top:76px;" width="61" height="47" viewBox="0 0 61 47"><defs><linearGradient id="tg" x1="0" y1="0" x2="0" y2="1"><stop offset="0" stop-color="#d9dcdf"/><stop offset="0.6" stop-color="#f2f3f4"/><stop offset="1" stop-color="#ffffff"/></linearGradient><linearGradient id="sky" x1="0" y1="0" x2="0" y2="1"><stop offset="0" stop-color="#1a5ad8"/><stop offset="0.5" stop-color="#8ac8f0"/></linearGradient></defs><rect x="0.5" y="0.5" width="59.5" height="45.5" fill="url(#tg)" stroke="#5a5a5a"/><path d="M60.5 1V46.5H1" stroke="#2e2e2e" fill="none"/><rect x="5.5" y="4.5" width="50" height="8" fill="#e6eef6" stroke="#c6c6c6"/><rect x="10" y="7.2" width="41" height="2.6" fill="#36689c"/><rect x="5.5" y="17.5" width="50" height="25" fill="none" stroke="#c0c0c0"/><rect x="11" y="20.5" width="2" height="2" fill="#2a4a6a"/><rect x="16" y="20.8" width="32" height="1.6" fill="#36689c"/><rect x="17" y="25" width="2" height="2" fill="#2a4a6a"/><rect x="22" y="25.3" width="26" height="1.6" fill="#36689c"/><rect x="17" y="29" width="2" height="2" fill="#2a4a6a"/><rect x="22" y="29.3" width="26" height="1.6" fill="#36689c"/><rect x="23" y="34" width="2" height="2" fill="#2a4a6a"/><rect x="28" y="34.3" width="20" height="1.6" fill="#36689c"/><rect x="23" y="38" width="2" height="2" fill="#2a4a6a"/><rect x="28" y="38.3" width="20" height="1.6" fill="#36689c"/></svg>
<svg class="a" style="left:137px;top:76px;" width="61" height="47" viewBox="0 0 61 47"><defs><linearGradient id="tg" x1="0" y1="0" x2="0" y2="1"><stop offset="0" stop-color="#d9dcdf"/><stop offset="0.6" stop-color="#f2f3f4"/><stop offset="1" stop-color="#ffffff"/></linearGradient><linearGradient id="sky" x1="0" y1="0" x2="0" y2="1"><stop offset="0" stop-color="#1a5ad8"/><stop offset="0.5" stop-color="#8ac8f0"/></linearGradient></defs><rect x="0.5" y="0.5" width="59.5" height="45.5" fill="url(#tg)" stroke="#5a5a5a"/><path d="M60.5 1V46.5H1" stroke="#2e2e2e" fill="none"/><rect x="5.5" y="4.5" width="50" height="8" fill="#e6eef6" stroke="#c6c6c6"/><rect x="10" y="7.2" width="41" height="2.6" fill="#36689c"/><rect x="5.5" y="17.5" width="23" height="25" fill="none" stroke="#c0c0c0"/><rect x="32.5" y="17.5" width="23" height="25" fill="none" stroke="#c0c0c0"/><rect x="8" y="21" width="2" height="2" fill="#2a4a6a"/><rect x="11" y="21.3" width="13" height="1.6" fill="#36689c"/><rect x="11" y="26" width="2" height="2" fill="#2a4a6a"/><rect x="14" y="26.3" width="10" height="1.6" fill="#36689c"/><rect x="11" y="30" width="2" height="2" fill="#2a4a6a"/><rect x="14" y="30.3" width="10" height="1.6" fill="#36689c"/><rect x="14" y="35" width="2" height="2" fill="#2a4a6a"/><rect x="17" y="35.3" width="7" height="1.6" fill="#36689c"/><rect x="35" y="21" width="2" height="2" fill="#2a4a6a"/><rect x="38" y="21.3" width="13" height="1.6" fill="#36689c"/><rect x="38" y="26" width="2" height="2" fill="#2a4a6a"/><rect x="41" y="26.3" width="10" height="1.6" fill="#36689c"/><rect x="38" y="30" width="2" height="2" fill="#2a4a6a"/><rect x="41" y="30.3" width="10" height="1.6" fill="#36689c"/><rect x="41" y="35" width="2" height="2" fill="#2a4a6a"/><rect x="44" y="35.3" width="7" height="1.6" fill="#36689c"/></svg>
<svg class="a" style="left:26px;top:141px;" width="61" height="47" viewBox="0 0 61 47"><defs><linearGradient id="tg" x1="0" y1="0" x2="0" y2="1"><stop offset="0" stop-color="#d9dcdf"/><stop offset="0.6" stop-color="#f2f3f4"/><stop offset="1" stop-color="#ffffff"/></linearGradient><linearGradient id="sky" x1="0" y1="0" x2="0" y2="1"><stop offset="0" stop-color="#1a5ad8"/><stop offset="0.5" stop-color="#8ac8f0"/></linearGradient></defs><rect x="0.5" y="0.5" width="59.5" height="45.5" fill="url(#tg)" stroke="#5a5a5a"/><path d="M60.5 1V46.5H1" stroke="#2e2e2e" fill="none"/><rect x="5.5" y="4.5" width="50" height="8" fill="#e6eef6" stroke="#c6c6c6"/><rect x="10" y="7.2" width="41" height="2.6" fill="#36689c"/></svg>
<svg class="a" style="left:137px;top:141px;" width="61" height="47" viewBox="0 0 61 47"><defs><linearGradient id="tg" x1="0" y1="0" x2="0" y2="1"><stop offset="0" stop-color="#d9dcdf"/><stop offset="0.6" stop-color="#f2f3f4"/><stop offset="1" stop-color="#ffffff"/></linearGradient><linearGradient id="sky" x1="0" y1="0" x2="0" y2="1"><stop offset="0" stop-color="#1a5ad8"/><stop offset="0.5" stop-color="#8ac8f0"/></linearGradient></defs><rect x="0.5" y="0.5" width="59.5" height="45.5" fill="url(#tg)" stroke="#5a5a5a"/><path d="M60.5 1V46.5H1" stroke="#2e2e2e" fill="none"/><rect x="5.5" y="4.5" width="50" height="38" fill="none" stroke="#c0c0c0"/><rect x="17" y="21" width="27" height="2" fill="#36689c"/><rect x="22" y="26" width="17" height="2" fill="#36689c"/></svg>
<svg class="a" style="left:26px;top:206px;" width="61" height="47" viewBox="0 0 61 47"><defs><linearGradient id="tg" x1="0" y1="0" x2="0" y2="1"><stop offset="0" stop-color="#d9dcdf"/><stop offset="0.6" stop-color="#f2f3f4"/><stop offset="1" stop-color="#ffffff"/></linearGradient><linearGradient id="sky" x1="0" y1="0" x2="0" y2="1"><stop offset="0" stop-color="#1a5ad8"/><stop offset="0.5" stop-color="#8ac8f0"/></linearGradient></defs><rect x="0.5" y="0.5" width="59.5" height="45.5" fill="url(#tg)" stroke="#5a5a5a"/><path d="M60.5 1V46.5H1" stroke="#2e2e2e" fill="none"/><rect x="5.5" y="4.5" width="50" height="8" fill="#e6eef6" stroke="#c6c6c6"/><rect x="10" y="7.2" width="41" height="2.6" fill="#36689c"/><rect x="5.5" y="17.5" width="50" height="25" fill="none" stroke="#c0c0c0"/></svg>
<svg class="a" style="left:137px;top:206px;" width="61" height="47" viewBox="0 0 61 47"><defs><linearGradient id="tg" x1="0" y1="0" x2="0" y2="1"><stop offset="0" stop-color="#d9dcdf"/><stop offset="0.6" stop-color="#f2f3f4"/><stop offset="1" stop-color="#ffffff"/></linearGradient><linearGradient id="sky" x1="0" y1="0" x2="0" y2="1"><stop offset="0" stop-color="#1a5ad8"/><stop offset="0.5" stop-color="#8ac8f0"/></linearGradient></defs><rect x="0.5" y="0.5" width="59.5" height="45.5" fill="url(#tg)" stroke="#5a5a5a"/><path d="M60.5 1V46.5H1" stroke="#2e2e2e" fill="none"/><rect x="5.5" y="4.5" width="50" height="8" fill="#e6eef6" stroke="#c6c6c6"/><rect x="10" y="7.2" width="41" height="2.6" fill="#36689c"/><rect x="5.5" y="17.5" width="50" height="25" fill="none" stroke="#c0c0c0"/><rect x="9.5" y="27.5" width="4.5" height="13" rx="1" fill="#4a78a8" stroke="#3a3020" stroke-width="0.8"/><rect x="16.5" y="22.5" width="5" height="18" rx="1" fill="#e8601a" stroke="#3a3020" stroke-width="0.8"/><rect x="23.5" y="31.0" width="5" height="9.5" rx="1" fill="#f6c020" stroke="#3a3020" stroke-width="0.8"/><rect x="32.5" y="32.5" width="5" height="8" rx="1" fill="#4a78a8" stroke="#3a3020" stroke-width="0.8"/><rect x="39.5" y="26.5" width="5" height="14" rx="1" fill="#e8601a" stroke="#3a3020" stroke-width="0.8"/><rect x="47.0" y="20.5" width="4.5" height="20" rx="1" fill="#f6c020" stroke="#3a3020" stroke-width="0.8"/></svg>
<svg class="a" style="left:26px;top:271px;" width="61" height="47" viewBox="0 0 61 47"><defs><linearGradient id="tg" x1="0" y1="0" x2="0" y2="1"><stop offset="0" stop-color="#d9dcdf"/><stop offset="0.6" stop-color="#f2f3f4"/><stop offset="1" stop-color="#ffffff"/></linearGradient><linearGradient id="sky" x1="0" y1="0" x2="0" y2="1"><stop offset="0" stop-color="#1a5ad8"/><stop offset="0.5" stop-color="#8ac8f0"/></linearGradient></defs><rect x="0.5" y="0.5" width="59.5" height="45.5" fill="url(#tg)" stroke="#5a5a5a"/><path d="M60.5 1V46.5H1" stroke="#2e2e2e" fill="none"/><rect x="5.5" y="4.5" width="50" height="8" fill="#e6eef6" stroke="#c6c6c6"/><rect x="10" y="7.2" width="41" height="2.6" fill="#36689c"/><rect x="5.5" y="17.5" width="50" height="25" fill="#fff" stroke="#8a96a2"/><rect x="5.5" y="22.5" width="50" height="0.9" fill="#9aa6b2"/><rect x="15.5" y="17.5" width="0.9" height="25" fill="#9aa6b2"/><rect x="5.5" y="27.5" width="50" height="0.9" fill="#9aa6b2"/><rect x="25.5" y="17.5" width="0.9" height="25" fill="#9aa6b2"/><rect x="5.5" y="32.5" width="50" height="0.9" fill="#9aa6b2"/><rect x="35.5" y="17.5" width="0.9" height="25" fill="#9aa6b2"/><rect x="5.5" y="37.5" width="50" height="0.9" fill="#9aa6b2"/><rect x="45.5" y="17.5" width="0.9" height="25" fill="#9aa6b2"/><rect x="8" y="19.5" width="5" height="1.6" fill="#36689c"/><rect x="8" y="24.5" width="5" height="1.6" fill="#36689c"/><rect x="8" y="29.5" width="5" height="1.6" fill="#36689c"/><rect x="8" y="34.5" width="5" height="1.6" fill="#36689c"/><rect x="8" y="39.5" width="5" height="1.6" fill="#36689c"/><rect x="18" y="19.5" width="5" height="1.6" fill="#36689c"/><rect x="18" y="24.5" width="5" height="1.6" fill="#36689c"/><rect x="18" y="29.5" width="5" height="1.6" fill="#36689c"/><rect x="18" y="34.5" width="5" height="1.6" fill="#36689c"/><rect x="18" y="39.5" width="5" height="1.6" fill="#36689c"/><rect x="28" y="19.5" width="5" height="1.6" fill="#36689c"/><rect x="28" y="24.5" width="5" height="1.6" fill="#36689c"/><rect x="28" y="29.5" width="5" height="1.6" fill="#36689c"/><rect x="28" y="34.5" width="5" height="1.6" fill="#36689c"/><rect x="28" y="39.5" width="5" height="1.6" fill="#36689c"/><rect x="38" y="19.5" width="5" height="1.6" fill="#36689c"/><rect x="38" y="24.5" width="5" height="1.6" fill="#36689c"/><rect x="38" y="29.5" width="5" height="1.6" fill="#36689c"/><rect x="38" y="34.5" width="5" height="1.6" fill="#36689c"/><rect x="38" y="39.5" width="5" height="1.6" fill="#36689c"/><rect x="48" y="19.5" width="5" height="1.6" fill="#36689c"/><rect x="48" y="24.5" width="5" height="1.6" fill="#36689c"/><rect x="48" y="29.5" width="5" height="1.6" fill="#36689c"/><rect x="48" y="34.5" width="5" height="1.6" fill="#36689c"/><rect x="48" y="39.5" width="5" height="1.6" fill="#36689c"/></svg>
<svg class="a" style="left:137px;top:271px;" width="61" height="47" viewBox="0 0 61 47"><defs><linearGradient id="tg" x1="0" y1="0" x2="0" y2="1"><stop offset="0" stop-color="#d9dcdf"/><stop offset="0.6" stop-color="#f2f3f4"/><stop offset="1" stop-color="#ffffff"/></linearGradient><linearGradient id="sky" x1="0" y1="0" x2="0" y2="1"><stop offset="0" stop-color="#1a5ad8"/><stop offset="0.5" stop-color="#8ac8f0"/></linearGradient></defs><rect x="0.5" y="0.5" width="59.5" height="45.5" fill="url(#tg)" stroke="#5a5a5a"/><path d="M60.5 1V46.5H1" stroke="#2e2e2e" fill="none"/><rect x="5.5" y="4.5" width="50" height="8" fill="#e6eef6" stroke="#c6c6c6"/><rect x="10" y="7.2" width="41" height="2.6" fill="#36689c"/><rect x="5" y="17" width="24" height="26" fill="url(#sky)"/><rect x="5" y="31.3" width="24" height="11.700000000000001" fill="#62b02a"/><path d="M5 43 L7 21 L10 30.0 L11 43Z" fill="#1a6a1a"/><circle cx="20.6" cy="28.700000000000003" r="3.6400000000000006" fill="#2a7a2a"/><rect x="32.5" y="17.5" width="23" height="25" fill="#f6f7f8" stroke="#c0c0c0"/><rect x="36" y="21" width="2" height="2" fill="#2a4a6a"/><rect x="40" y="21.3" width="11" height="1.6" fill="#36689c"/><rect x="40" y="26" width="2" height="2" fill="#2a4a6a"/><rect x="43" y="26.3" width="8" height="1.6" fill="#36689c"/><rect x="40" y="30" width="2" height="2" fill="#2a4a6a"/><rect x="43" y="30.3" width="8" height="1.6" fill="#36689c"/><rect x="43" y="35" width="2" height="2" fill="#2a4a6a"/><rect x="46" y="35.3" width="5" height="1.6" fill="#36689c"/></svg>
<svg class="a" style="left:26px;top:336px;" width="61" height="47" viewBox="0 0 61 47"><defs><linearGradient id="tg" x1="0" y1="0" x2="0" y2="1"><stop offset="0" stop-color="#d9dcdf"/><stop offset="0.6" stop-color="#f2f3f4"/><stop offset="1" stop-color="#ffffff"/></linearGradient><linearGradient id="sky" x1="0" y1="0" x2="0" y2="1"><stop offset="0" stop-color="#1a5ad8"/><stop offset="0.5" stop-color="#8ac8f0"/></linearGradient></defs><rect x="0.5" y="0.5" width="59.5" height="45.5" fill="url(#tg)" stroke="#5a5a5a"/><path d="M60.5 1V46.5H1" stroke="#2e2e2e" fill="none"/><rect x="5.5" y="4.5" width="50" height="8" fill="#e6eef6" stroke="#c6c6c6"/><rect x="10" y="7.2" width="41" height="2.6" fill="#36689c"/><rect x="5.5" y="17.5" width="23" height="25" fill="none" stroke="#c0c0c0"/><rect x="32.5" y="17.5" width="23" height="25" fill="none" stroke="#c0c0c0"/><rect x="8" y="21" width="2" height="2" fill="#2a4a6a"/><rect x="11" y="21.3" width="13" height="1.6" fill="#36689c"/><rect x="11" y="26" width="2" height="2" fill="#2a4a6a"/><rect x="14" y="26.3" width="10" height="1.6" fill="#36689c"/><rect x="11" y="30" width="2" height="2" fill="#2a4a6a"/><rect x="14" y="30.3" width="10" height="1.6" fill="#36689c"/><rect x="14" y="35" width="2" height="2" fill="#2a4a6a"/><rect x="17" y="35.3" width="7" height="1.6" fill="#36689c"/><rect x="36.4" y="27" width="4.200000000000003" height="13" rx="1" fill="#4a78a8" stroke="#3a3020" stroke-width="0.8"/><rect x="42.3" y="21.7" width="4.700000000000003" height="18.3" rx="1" fill="#e8601a" stroke="#3a3020" stroke-width="0.8"/><rect x="48.3" y="30" width="4.700000000000003" height="10" rx="1" fill="#f6c020" stroke="#3a3020" stroke-width="0.8"/></svg>
<svg class="a" style="left:137px;top:336px;" width="61" height="47" viewBox="0 0 61 47"><defs><linearGradient id="tg" x1="0" y1="0" x2="0" y2="1"><stop offset="0" stop-color="#d9dcdf"/><stop offset="0.6" stop-color="#f2f3f4"/><stop offset="1" stop-color="#ffffff"/></linearGradient><linearGradient id="sky" x1="0" y1="0" x2="0" y2="1"><stop offset="0" stop-color="#1a5ad8"/><stop offset="0.5" stop-color="#8ac8f0"/></linearGradient></defs><rect x="0.5" y="0.5" width="59.5" height="45.5" fill="url(#tg)" stroke="#5a5a5a"/><path d="M60.5 1V46.5H1" stroke="#2e2e2e" fill="none"/><rect x="5.5" y="4.5" width="50" height="8" fill="#e6eef6" stroke="#c6c6c6"/><rect x="10" y="7.2" width="41" height="2.6" fill="#36689c"/><rect x="5.5" y="17.5" width="23" height="25" fill="none" stroke="#c0c0c0"/><rect x="8" y="21" width="2" height="2" fill="#2a4a6a"/><rect x="11" y="21.3" width="13" height="1.6" fill="#36689c"/><rect x="11" y="26" width="2" height="2" fill="#2a4a6a"/><rect x="14" y="26.3" width="10" height="1.6" fill="#36689c"/><rect x="11" y="30" width="2" height="2" fill="#2a4a6a"/><rect x="14" y="30.3" width="10" height="1.6" fill="#36689c"/><rect x="14" y="35" width="2" height="2" fill="#2a4a6a"/><rect x="17" y="35.3" width="7" height="1.6" fill="#36689c"/><rect x="32" y="17" width="24" height="26" fill="url(#sky)"/><rect x="32" y="31.3" width="24" height="11.700000000000001" fill="#62b02a"/><path d="M32 43 L34 21 L37 30.0 L38 43Z" fill="#1a6a1a"/><circle cx="47.6" cy="28.700000000000003" r="3.6400000000000006" fill="#2a7a2a"/></svg>
<svg class="a" style="left:26px;top:401px;" width="61" height="47" viewBox="0 0 61 47"><defs><linearGradient id="tg" x1="0" y1="0" x2="0" y2="1"><stop offset="0" stop-color="#d9dcdf"/><stop offset="0.6" stop-color="#f2f3f4"/><stop offset="1" stop-color="#ffffff"/></linearGradient><linearGradient id="sky" x1="0" y1="0" x2="0" y2="1"><stop offset="0" stop-color="#1a5ad8"/><stop offset="0.5" stop-color="#8ac8f0"/></linearGradient></defs><rect x="0.5" y="0.5" width="59.5" height="45.5" fill="url(#tg)" stroke="#5a5a5a"/><path d="M60.5 1V46.5H1" stroke="#2e2e2e" fill="none"/><rect x="5.5" y="4.5" width="50" height="8" fill="#e6eef6" stroke="#c6c6c6"/><rect x="10" y="7.2" width="41" height="2.6" fill="#36689c"/><rect x="5.5" y="17.5" width="23" height="25" fill="none" stroke="#c0c0c0"/><rect x="32.5" y="17.5" width="23" height="25" fill="none" stroke="#c0c0c0"/><rect x="16" y="19" width="4" height="4" fill="#c03a2a"/><rect x="36" y="21" width="14" height="1.6" fill="#36689c"/></svg>
<svg class="a" style="left:137px;top:401px;" width="61" height="47" viewBox="0 0 61 47"><defs><linearGradient id="tg" x1="0" y1="0" x2="0" y2="1"><stop offset="0" stop-color="#d9dcdf"/><stop offset="0.6" stop-color="#f2f3f4"/><stop offset="1" stop-color="#ffffff"/></linearGradient><linearGradient id="sky" x1="0" y1="0" x2="0" y2="1"><stop offset="0" stop-color="#1a5ad8"/><stop offset="0.5" stop-color="#8ac8f0"/></linearGradient></defs><rect x="0.5" y="0.5" width="59.5" height="45.5" fill="url(#tg)" stroke="#5a5a5a"/><path d="M60.5 1V46.5H1" stroke="#2e2e2e" fill="none"/><rect x="5.5" y="4.5" width="50" height="8" fill="#e6eef6" stroke="#c6c6c6"/><rect x="10" y="7.2" width="41" height="2.6" fill="#36689c"/><rect x="5.5" y="17.5" width="23" height="25" fill="none" stroke="#c0c0c0"/><rect x="32.5" y="17.5" width="23" height="25" fill="none" stroke="#c0c0c0"/><rect x="8" y="21" width="14" height="1.6" fill="#36689c"/></svg>
</div>
<div class="a" style="left:1035px;top:190px;width:111px;height:65px;border:2px solid #000;box-sizing:border-box"></div>
<div class="a" style="left:1038px;top:193px;width:105px;height:59px;border:1px solid #000;box-sizing:border-box"></div>
<div class="a" style="left:0px;top:667px;width:1280px;height:38px;background:#f8f7fa"></div>
<div class="a" style="left:0px;top:668px;width:1280px;height:1px;background:#c4c4c4"></div>
<div class="a" style="left:0px;top:669px;width:1280px;height:1px;background:#fcfbfd"></div>
<div class="a" style="left:0px;top:704px;width:1280px;height:1px;background:#c4c4c4"></div>
<div class="a" style="left:0px;top:705px;width:1280px;height:1px;background:#ffffff"></div>
<div class="a" style="left:0px;top:669px;width:1px;height:35px;background:#c8c8c8"></div>
<div class="a" style="left:10px;top:669px;width:1px;height:35px;background:#bcbabe"></div>
<svg class="a" style="left:3px;top:678px;" width="5" height="17" viewBox="0 0 5 17"><path d="M2.5 0.5L4.5 2.5L2.5 4.5L0.5 2.5Z" fill="#d8d8da" stroke="#8e8e90" stroke-width="0.9"/><path d="M2.5 4.1L4.5 6.1L2.5 8.1L0.5 6.1Z" fill="#d8d8da" stroke="#8e8e90" stroke-width="0.9"/><path d="M2.5 7.7L4.5 9.7L2.5 11.7L0.5 9.7Z" fill="#d8d8da" stroke="#8e8e90" stroke-width="0.9"/><path d="M2.5 11.3L4.5 13.3L2.5 15.3L0.5 13.3Z" fill="#d8d8da" stroke="#8e8e90" stroke-width="0.9"/></svg>
<div class="a" style="left:14px;top:670px;width:31px;height:33px;background:linear-gradient(#c8c8cb,#d6d6d8 40%,#d8d8da);border:1px solid #a0a0a2;border-radius:3px;box-sizing:border-box"></div>
<svg class="a" style="left:23px;top:675px;" width="14" height="22" viewBox="0 0 14 22"><path d="M1.5 1.5V17L5 13.5L8.5 20.5L11 19.5L7.5 12.5H12.5Z" fill="#fff" stroke="#000" stroke-width="1.3" stroke-linejoin="round"/></svg>
<svg class="a" style="left:56px;top:674px;" width="24" height="24" viewBox="0 0 24 24"><path d="M1 23L23 1" stroke="#222" stroke-width="1.5"/></svg>
<svg class="a" style="left:88px;top:680px;" width="22" height="12" viewBox="0 0 22 12"><path d="M0 6H19" stroke="#222" stroke-width="1.5"/><path d="M15 2.5L21 6L15 9.5Z" fill="#222"/></svg>
<svg class="a" style="left:119px;top:678px;" width="23" height="15" viewBox="0 0 23 15"><defs><linearGradient id="bl" x1="0" y1="0" x2="0" y2="1"><stop offset="0" stop-color="#7ab8ff"/><stop offset="1" stop-color="#1a62d8"/></linearGradient></defs><rect x="0.7" y="0.7" width="21" height="13.5" rx="1" fill="url(#bl)" stroke="#1a4aa8" stroke-width="1.2"/></svg>
<svg class="a" style="left:150px;top:678px;" width="23" height="15" viewBox="0 0 23 15"><ellipse cx="11.3" cy="7.3" rx="10.5" ry="6.5" fill="url(#bl)" stroke="#1a4aa8" stroke-width="1.2"/></svg>
<svg class="a" style="left:185px;top:676px;" width="16" height="20" viewBox="0 0 16 20"><path d="M1 1H15V6H13.5L12.5 3.5H9.8V17.5L12 18.5V19.5H4V18.5L6.2 17.5V3.5H3.5L2.5 6H1Z" fill="#111"/></svg>
<svg class="a" style="left:217px;top:678px;" width="17" height="16" viewBox="0 0 17 16"><path d="M1 2V14M16 2V14M1 8H16" stroke="#111" stroke-width="2.5"/><rect x="1" y="5.5" width="15" height="5" fill="#111"/></svg>
<div class="a" style="left:246px;top:674px;width:1px;height:24px;background:#e0dee3"></div>
<svg class="a" style="left:253px;top:673px;" width="24" height="24" viewBox="0 0 24 24"><defs><linearGradient id="cu" x1="0" y1="0" x2="1" y2="1"><stop offset="0" stop-color="#2a6ae0"/><stop offset="1" stop-color="#cfe4ff"/></linearGradient></defs><path d="M1 14Q8 11 23 10V22Q10 23 5 22Q1 20 1 14Z" fill="url(#cu)"/><path d="M6 19L9 16L20 1L23 3L12 18L7 21Z" fill="#f2c21a" stroke="#c08a00" stroke-width="0.8"/></svg>
<svg class="a" style="left:283.5px;top:684px;" width="6" height="4" viewBox="0 0 6 4"><path d="M0 0H6L3 3Z" fill="#000"/></svg>
<svg class="a" style="left:296px;top:675px;" width="24" height="23" viewBox="0 0 24 23"><path d="M3 3H12V19H20" fill="none" stroke="#333" stroke-width="1.5"/><rect x="0.5" y="0.5" width="5" height="5" fill="#3a8ae8" stroke="#1a4aa8"/><rect x="17.5" y="16.5" width="5" height="5" fill="#3a8ae8" stroke="#1a4aa8"/></svg>
<svg class="a" style="left:326.5px;top:684px;" width="6" height="4" viewBox="0 0 6 4"><path d="M0 0H6L3 3Z" fill="#000"/></svg>
<svg class="a" style="left:340px;top:675px;" width="23" height="22" viewBox="0 0 23 22"><rect x="0.8" y="0.8" width="13" height="13" fill="#4a98f0" stroke="#1a4aa8" stroke-width="1.2"/><circle cx="15" cy="12" r="7" fill="#4a98f0" stroke="#1a4aa8" stroke-width="1.2"/><path d="M7 7L14 20H0.8Z" fill="#4a98f0" stroke="#1a4aa8" stroke-width="1.2"/></svg>
<svg class="a" style="left:369.5px;top:684px;" width="6" height="4" viewBox="0 0 6 4"><path d="M0 0H6L3 3Z" fill="#000"/></svg>
<svg class="a" style="left:383px;top:675px;" width="23" height="22" viewBox="0 0 23 22"><defs><radialGradient id="sm" cx="0.4" cy="0.35" r="0.7"><stop offset="0" stop-color="#9ccaff"/><stop offset="1" stop-color="#1a62d8"/></radialGradient></defs><circle cx="11.5" cy="11" r="10.5" fill="url(#sm)" stroke="#1a4aa8" stroke-width="1"/><circle cx="8" cy="8" r="1.2" fill="#1a4aa8"/><circle cx="15" cy="8" r="1.2" fill="#1a4aa8"/><path d="M6 13Q11.5 18 17 13" stroke="#1a4aa8" fill="none" stroke-width="1.2"/></svg>
<svg class="a" style="left:412.5px;top:684px;" width="6" height="4" viewBox="0 0 6 4"><path d="M0 0H6L3 3Z" fill="#000"/></svg>
<svg class="a" style="left:425px;top:678px;" width="23" height="16" viewBox="0 0 23 16"><path d="M0.5 8L7 1.5V5H16V1.5L22.5 8L16 14.5V11H7V14.5Z" fill="#3a90f0" stroke="#1a4aa8" stroke-width="1"/></svg>
<svg class="a" style="left:455.5px;top:684px;" width="6" height="4" viewBox="0 0 6 4"><path d="M0 0H6L3 3Z" fill="#000"/></svg>
<svg class="a" style="left:468px;top:675px;" width="23" height="22" viewBox="0 0 23 22"><rect x="0.8" y="0.8" width="21" height="20" fill="#3a90f0" stroke="#1a4aa8" stroke-width="1.2"/><path d="M5 1V21M1 5H22" stroke="#1a4aa8" stroke-width="1"/><rect x="6" y="6" width="15" height="14" fill="#5aa6f4"/></svg>
<svg class="a" style="left:498.5px;top:684px;" width="6" height="4" viewBox="0 0 6 4"><path d="M0 0H6L3 3Z" fill="#000"/></svg>
<svg class="a" style="left:511px;top:674px;" width="24" height="24" viewBox="0 0 24 24"><defs><linearGradient id="co" x1="0" y1="0" x2="0" y2="1"><stop offset="0" stop-color="#9ccaff"/><stop offset="1" stop-color="#1a62d8"/></linearGradient></defs><path d="M4 1H20Q23 1 23 4V13Q23 16 20 16H10L3 22L6 16H4Q1 16 1 13V4Q1 1 4 1Z" fill="url(#co)" stroke="#1a4aa8" stroke-width="1"/></svg>
<svg class="a" style="left:541.5px;top:684px;" width="6" height="4" viewBox="0 0 6 4"><path d="M0 0H6L3 3Z" fill="#000"/></svg>
<svg class="a" style="left:555px;top:675px;" width="22" height="22" viewBox="0 0 22 22"><path d="M11 1L14 8.5H21.5L15.5 13L17.8 20.5L11 16L4.2 20.5L6.5 13L0.5 8.5H8Z" fill="#3a90f0" stroke="#1a4aa8" stroke-width="1"/></svg>
<svg class="a" style="left:584.5px;top:684px;" width="6" height="4" viewBox="0 0 6 4"><path d="M0 0H6L3 3Z" fill="#000"/></svg>
<div class="a" style="left:598px;top:674px;width:1px;height:24px;background:#e0dee3"></div>
<svg class="a" style="left:607px;top:675px;" width="21" height="22" viewBox="0 0 21 22"><path d="M1 15Q3 6 7 3Q12 0 20 1" fill="none" stroke="#333" stroke-width="1.4"/><rect x="5" y="2" width="5" height="5" fill="#3a8ae8"/><path d="M9 6V19L12 16L14.5 21L16.5 20L14 15H18Z" fill="#fff" stroke="#333" stroke-width="1"/></svg>
<svg class="a" style="left:640px;top:675px;" width="21" height="22" viewBox="0 0 21 22"><path d="M4 21L1 18L15 2Q18 0 20 3L18 6Z" fill="#f2a21a" stroke="#c07000" stroke-width="0.8"/><path d="M1 18L4 21L7 19L3 15Z" fill="#e0e0e0" stroke="#999" stroke-width="0.8"/></svg>
<div class="a" style="left:668px;top:674px;width:1px;height:24px;background:#e0dee3"></div>
<svg class="a" style="left:676px;top:675px;" width="24" height="21" viewBox="0 0 24 21"><rect x="0.8" y="0.8" width="22" height="19" rx="3" fill="#f0f0f0" stroke="#a8a8a8" stroke-width="1.2"/><text x="12" y="17" text-anchor="middle" font-family="Liberation Sans" font-weight="bold" font-size="17" fill="#555" stroke="#222" stroke-width="0.5">A</text></svg>
<svg class="a" style="left:707px;top:675px;" width="22" height="22" viewBox="0 0 22 22"><rect x="2" y="2" width="10" height="9" fill="#2aa02a" stroke="#1a6a1a" stroke-width="0.8"/><circle cx="16" cy="9" r="5" fill="#e83a1a"/><rect x="1" y="11" width="20" height="10" rx="3" fill="#6aaaf0" stroke="#1a4aa8" stroke-width="0.8"/><path d="M8 14H19M8 18H19" stroke="#fff" stroke-width="1.2"/></svg>
<svg class="a" style="left:737px;top:675px;" width="22" height="21" viewBox="0 0 22 21"><path d="M1 7L17 1L21 14L5 20Z" fill="#f0e8b0" stroke="#c0a850" stroke-width="0.8"/><path d="M4 8L16 4L19 13L7 17Z" fill="#5ab0e8"/><path d="M7 16L11 11L14 14L19 11L19 13L7 17Z" fill="#4a9a3a"/><path d="M14 3L21 1L18 7" fill="#f2c21a"/></svg>
<div class="a" style="left:767px;top:674px;width:1px;height:24px;background:#e0dee3"></div>
<svg class="a" style="left:779px;top:677px;" width="17" height="18" viewBox="0 0 17 18"><path d="M8.5 3A6.5 6.5 0 1 0 15 9.5" fill="none" stroke="#444" stroke-width="2.2"/><path d="M8.5 3A6.5 6.5 0 1 0 15 9.5" fill="none" stroke="#ddd" stroke-width="0.8"/><path d="M9 0L15 3L9 6Z" fill="#444"/><circle cx="8.5" cy="9.5" r="3" fill="none" stroke="#666" stroke-width="1.2"/></svg>
<svg class="a" style="left:809px;top:675px;" width="15" height="22" viewBox="0 0 15 22"><rect x="0" y="0" width="2" height="22" fill="#333"/><rect x="4" y="2" width="9" height="7" fill="#f8d040" stroke="#c09000" stroke-width="0.8"/><rect x="4" y="12" width="10" height="8" fill="#6aaaf0" stroke="#1a4aa8" stroke-width="0.8"/></svg>
<svg class="a" style="left:832.5px;top:684px;" width="6" height="4" viewBox="0 0 6 4"><path d="M0 0H6L3 3Z" fill="#000"/></svg>
<svg class="a" style="left:846px;top:675px;" width="21" height="22" viewBox="0 0 21 22"><rect x="0.5" y="0.5" width="9" height="9" fill="#f8c020" stroke="#c08000" stroke-width="0.8"/><rect x="10.5" y="11.5" width="10" height="10" fill="#f8a020" stroke="#c07000" stroke-width="0.8"/><rect x="5" y="5" width="11" height="11" fill="#3a8ae8" stroke="#1a4aa8" stroke-width="0.8"/></svg>
<svg class="a" style="left:875.5px;top:684px;" width="6" height="4" viewBox="0 0 6 4"><path d="M0 0H6L3 3Z" fill="#000"/></svg>
<div class="a" style="left:889px;top:674px;width:1px;height:24px;background:#e0dee3"></div>
<svg class="a" style="left:898px;top:676px;" width="21" height="20" viewBox="0 0 21 20"><path d="M5 1H18Q20 1 20 3V14Q20 16 18 16H5Z" fill="#dcdcdc" stroke="#c8c8c8"/><path d="M1 11H8V8L13 13L8 18V15H1Z" fill="#e4e4e4" stroke="#c8c8c8"/></svg>
<svg class="a" style="left:937px;top:676px;" width="16" height="20" viewBox="0 0 16 20"><path d="M3 3V15L6 12L8 17L10 16L8 11H12Z" fill="#f2f2f2" stroke="#d0d0d0"/><path d="M8 1L14 3L12 6" fill="none" stroke="#d8d8d8" stroke-width="1.5"/></svg>
<div class="a" style="left:964px;top:672px;width:10px;height:30px;background:linear-gradient(#f4f4f4,#c4c4c6)"></div>
<svg class="a" style="left:966px;top:694px;" width="6" height="4" viewBox="0 0 6 4"><path d="M0 0H6L3 3Z" fill="#000"/></svg>
<div class="a" style="left:0px;top:706px;width:1280px;height:20px;background:#f6f6f6"></div>
<div class="a" style="left:5px;top:707px;width:429px;height:19px;border-left:1px solid #b4b4b6;border-top:1px solid #b4b4b6;box-sizing:border-box"></div>
<div class="a" style="left:442px;top:707px;width:215px;height:19px;border-left:1px solid #b4b4b6;border-top:1px solid #b4b4b6;box-sizing:border-box"></div>
<div class="a" style="left:663px;top:707px;width:22px;height:19px;border-left:1px solid #b4b4b6;border-top:1px solid #b4b4b6;box-sizing:border-box"></div>
<div class="a" style="left:690px;top:707px;width:24px;height:19px;border-left:1px solid #b4b4b6;border-top:1px solid #b4b4b6;box-sizing:border-box"></div>
<div class="a" style="left:719px;top:707px;width:69px;height:19px;border-left:1px solid #b4b4b6;border-top:1px solid #b4b4b6;box-sizing:border-box"></div>
<div class="a" style="left:792px;top:707px;width:288px;height:19px;border-left:1px solid #b4b4b6;border-top:1px solid #b4b4b6;box-sizing:border-box"></div>
<div class="a" style="left:1088px;top:707px;width:138px;height:19px;border-left:1px solid #b4b4b6;border-top:1px solid #b4b4b6;box-sizing:border-box"></div>
<div class="a" style="left:1231px;top:707px;width:44px;height:19px;border-left:1px solid #b4b4b6;border-top:1px solid #b4b4b6;box-sizing:border-box"></div>
<svg class="a" style="left:449px;top:708px;" width="15" height="14" viewBox="0 0 15 14"><path d="M4 0V10H14" fill="none" stroke="#2a3a8a" stroke-width="1" stroke-dasharray="1.5 1"/><path d="M0 4H14V10" fill="none" stroke="#2a3a8a" stroke-width="1" stroke-dasharray="1.5 1"/></svg>
<div class="t" style="left:468.00px;top:709px;font-size:13.3px;line-height:15px;color:#000;transform:scaleX(1.0828);">10.12 / 6.75</div>
<svg class="a" style="left:556px;top:707px;" width="15" height="15" viewBox="0 0 15 15"><rect x="4.5" y="4.5" width="9" height="9" fill="none" stroke="#222" stroke-width="1" stroke-dasharray="1.5 1"/><path d="M1 1V6M1 1H6M12 1H14V3" stroke="#222" stroke-width="1" fill="none"/></svg>
<div class="t" style="left:575.00px;top:709px;font-size:13.3px;line-height:15px;color:#000;transform:scaleX(1.0759);">0.00 x 0.00</div>
<div class="t" style="left:723.00px;top:709px;font-size:13.3px;line-height:15px;color:#000;transform:scaleX(1.0327);">Slide 1 / 1</div>
<div class="t" style="left:797.00px;top:709px;font-size:13.3px;line-height:15px;color:#000;transform:scaleX(1.0916);">Default</div>
<svg class="a" style="left:1093px;top:711px;" width="12" height="12" viewBox="0 0 12 12"><circle cx="6" cy="6" r="5.3" fill="#dceaf8" stroke="#3a5a80" stroke-width="1.1"/><path d="M3 6H9" stroke="#1a2a40" stroke-width="1.3"/></svg>
<div class="a" style="left:1109px;top:715px;width:97px;height:1px;background:#7a7a7a"></div>
<div class="a" style="left:1109px;top:714px;width:1px;height:3px;background:#7a7a7a"></div>
<div class="a" style="left:1156px;top:711px;width:1px;height:10px;background:#7a7a7a"></div>
<svg class="a" style="left:1131px;top:711px;" width="10" height="10" viewBox="0 0 10 10"><circle cx="5" cy="5" r="4" fill="#6a88a8" stroke="#2a3a50" stroke-width="1"/><circle cx="4.3" cy="4.3" r="1.6" fill="#9ab4cc"/></svg>
<svg class="a" style="left:1211px;top:711px;" width="12" height="12" viewBox="0 0 12 12"><circle cx="6" cy="6" r="5.3" fill="#dceaf8" stroke="#3a5a80" stroke-width="1.1"/><path d="M3 6H9M6 3V9" stroke="#1a2a40" stroke-width="1.3"/></svg>
<div class="t" style="left:1238.50px;top:710px;font-size:13.3px;line-height:15px;color:#000;transform:scaleX(0.9990);">60%</div>
<div class="a" style="left:0px;top:726px;width:1280px;height:26px;background:#f6f6f6"></div>
<div class="a" style="left:0px;top:726px;width:1280px;height:1px;background:#ffffff"></div>
<svg class="a" style="left:2px;top:728px;" width="91" height="23" viewBox="0 0 91 23"><defs><linearGradient id="ap" x1="0" y1="0" x2="0" y2="1"><stop offset="0" stop-color="#9ab0dc"/><stop offset="0.45" stop-color="#4a68b0"/><stop offset="0.75" stop-color="#0c2c80"/><stop offset="1" stop-color="#1a80d8"/></linearGradient><linearGradient id="cl" x1="0" y1="0" x2="0" y2="1"><stop offset="0" stop-color="#ffffff"/><stop offset="1" stop-color="#a8d8f8"/></linearGradient></defs><rect x="19.5" y="2" width="70" height="19" rx="9.5" fill="url(#ap)" stroke="#0a1a50" stroke-width="1.2"/><path d="M4 21Q0 20 0.8 15Q1.5 11 5 11Q6 5 13 4Q19 3.5 22 8Q28 7 30 12Q35 12 36 16Q36 21 31 21Z" fill="url(#cl)" stroke="#8aa2bc" stroke-width="0.9"/><text x="8" y="18.5" font-family="Liberation Sans" font-weight="bold" font-size="11" fill="#1a3a7a">PC</text><circle cx="27" cy="9.5" r="1.5" fill="none" stroke="#1a3a7a" stroke-width="0.8"/></svg>
<div class="t" style="left:44.00px;top:733px;font-size:12.5px;line-height:14px;font-weight:bold;color:#ffffff;transform:scaleX(0.7400);">App List</div>
<svg class="a" style="left:96px;top:729px;" width="4" height="22" viewBox="0 0 4 22"><rect x="0" y="0.0" width="1.2" height="1.2" fill="#8a8a8a"/><rect x="2" y="2.5" width="1.2" height="1.2" fill="#8a8a8a"/><rect x="0" y="5.0" width="1.2" height="1.2" fill="#8a8a8a"/><rect x="2" y="7.5" width="1.2" height="1.2" fill="#8a8a8a"/><rect x="0" y="10.0" width="1.2" height="1.2" fill="#8a8a8a"/><rect x="2" y="12.5" width="1.2" height="1.2" fill="#8a8a8a"/><rect x="0" y="15.0" width="1.2" height="1.2" fill="#8a8a8a"/><rect x="2" y="17.5" width="1.2" height="1.2" fill="#8a8a8a"/><rect x="0" y="20.0" width="1.2" height="1.2" fill="#8a8a8a"/></svg>
<div class="a" style="left:101px;top:728px;width:200px;height:23px;background:#d8d8da;border:1px solid #a8a8aa;box-sizing:border-box"></div>
<svg class="a" style="left:104px;top:732px;" width="16" height="16" viewBox="0 0 16 16"><rect x="0.5" y="0.5" width="15" height="15" fill="#f8f6ea" stroke="#9a9a88"/><ellipse cx="9" cy="10" rx="4" ry="3.5" fill="#e3d21a"/><path d="M3 5H10V10L7 12H3Z" fill="#2ea83a"/></svg>
<div class="t" style="left:124.00px;top:734px;font-size:12.3px;line-height:14px;color:#000;transform:scaleX(0.8953);">Untitled 1 - OpenOffice.org Impress</div>
<div class="t" style="left:1224.00px;top:733px;font-size:11.3px;line-height:12px;color:#000;transform:scaleX(0.9847);">11:03</div>
<svg class="a" style="left:1259px;top:732px;" width="18" height="17" viewBox="0 0 18 17"><rect x="0.5" y="0.5" width="17" height="16" rx="3" fill="#d07050"/><circle cx="9" cy="8.5" r="5.2" fill="none" stroke="#fff" stroke-width="1.8"/><path d="M9 4.5V9" stroke="#fff" stroke-width="1.8"/><circle cx="9" cy="8.5" r="3.2" fill="none" stroke="#e8b8a0" stroke-width="0.8"/></svg>
<div class="a" style="left:0px;top:752px;width:1280px;height:48px;background:#000"></div>
<div class="a" style="left:0px;top:752px;width:1280px;height:2px;background:#1a2c3c"></div>
<svg class="a" style="left:22px;top:766px;" width="34" height="22" viewBox="0 0 34 22"><path d="M8 6H24Q31 6 31 13Q31 19 24 19H6" fill="none" stroke="#a4a4a4" stroke-width="3"/><path d="M1 6L10 0.5V11.5Z" fill="#a4a4a4"/></svg>
<svg class="a" style="left:92px;top:764px;" width="41" height="25" viewBox="0 0 41 25"><path d="M1.5 13L20.5 2L39.5 13" fill="none" stroke="#a4a4a4" stroke-width="3"/><path d="M9.5 10V23H31.5V10" fill="none" stroke="#a4a4a4" stroke-width="3"/></svg>
<svg class="a" style="left:170px;top:765px;" width="36" height="24" viewBox="0 0 36 24"><rect x="1.5" y="8.5" width="26" height="14" fill="none" stroke="#a4a4a4" stroke-width="3"/><path d="M9 3H33V17" fill="none" stroke="#a4a4a4" stroke-width="3"/></svg>
<svg class="a" style="left:246px;top:766px;" width="33" height="23" viewBox="0 0 33 23"><path d="M1.5 8V1.5H8M25 1.5H31.5V8M31.5 15V21.5H25M8 21.5H1.5V15" fill="none" stroke="#fff" stroke-width="3"/><path d="M16.5 5V9M16.5 14V18M10 11.5H14M19 11.5H23M12 7L14 9M21 7L19 9M12 16L14 14M21 16L19 14" stroke="#e8e8e8" stroke-width="1.4"/></svg>
<svg class="a" style="left:625px;top:770px;" width="32" height="13" viewBox="0 0 32 13"><path d="M2 11L16 2L30 11" fill="none" stroke="#c8c8c8" stroke-width="2.2"/></svg>
<svg class="a" style="left:993px;top:766px;" width="17" height="22" viewBox="0 0 17 22"><path d="M8.5 1V18" stroke="#ddd" stroke-width="2"/><circle cx="8.5" cy="19" r="2.5" fill="#ddd"/><path d="M5.5 4L8.5 0L11.5 4Z" fill="#ddd"/><path d="M8.5 14L3 10V7" fill="none" stroke="#ddd" stroke-width="1.6"/><circle cx="3" cy="6" r="1.8" fill="#ddd"/><path d="M8.5 12L14 9V6" fill="none" stroke="#ddd" stroke-width="1.6"/><rect x="12.5" y="4" width="3" height="3" fill="#ddd"/></svg>
<svg class="a" style="left:1020px;top:766px;" width="24" height="21" viewBox="0 0 24 21"><path d="M12 20L0.5 6Q12 -3 23.5 6Z" fill="#6a6a6a"/><text x="12" y="17" text-anchor="middle" font-family="Liberation Sans" font-weight="bold" font-size="15" fill="#fff">?</text></svg>
<svg class="a" style="left:1056px;top:766px;" width="17" height="22" viewBox="0 0 17 22"><path d="M0.5 0.5H12L16.5 5V21.5H0.5Z" fill="#bbb"/><rect x="4" y="7" width="9" height="10" fill="none" stroke="#333" stroke-width="1.3"/><rect x="6" y="9" width="5" height="6" fill="#777"/></svg>
<svg class="a" style="left:1085px;top:769px;" width="24" height="18" viewBox="0 0 24 18"><rect x="0" y="0" width="24" height="18" fill="#d8d8d8"/><path d="M3 16V4L12 11L21 4V16" fill="none" stroke="#111" stroke-width="2.6"/></svg>
<div class="t" style="left:1119.00px;top:760px;font-size:31px;line-height:35px;color:#ffffff;transform:scaleX(1.0239);">11:03</div>
<svg class="a" style="left:1203px;top:765px;" width="23" height="24" viewBox="0 0 23 24"><path d="M2 7Q11.5 -2 21 7" fill="none" stroke="#ddd" stroke-width="2"/><path d="M5 10Q11.5 4 18 10" fill="none" stroke="#ddd" stroke-width="2"/><path d="M8 13Q11.5 10 15 13" fill="none" stroke="#ddd" stroke-width="2"/><path d="M11.5 12V19" stroke="#f0a020" stroke-width="1.6"/><path d="M8 17L11.5 21.5L15 17Z" fill="#f0a020"/><path d="M15.5 22V14" stroke="#888" stroke-width="1.6"/><path d="M12.5 15L15.5 11L18.5 15Z" fill="#888"/></svg>
<svg class="a" style="left:1232px;top:765px;" width="20" height="22" viewBox="0 0 20 22"><path d="M0 22L19 0V22Z" fill="#777"/><path d="M3 22V18M7 22V14M11 22V10M15 22V5" stroke="#000" stroke-width="1"/></svg>
<svg class="a" style="left:1257px;top:764px;" width="15" height="24" viewBox="0 0 15 24"><rect x="4" y="0" width="6" height="2" fill="#555"/><rect x="0.5" y="2" width="13" height="21" fill="#444"/><rect x="1" y="15" width="12" height="8" fill="#22cc22"/><path d="M3 7L11 15M11 7L3 15" stroke="#e82020" stroke-width="2"/></svg>
</body></html>
